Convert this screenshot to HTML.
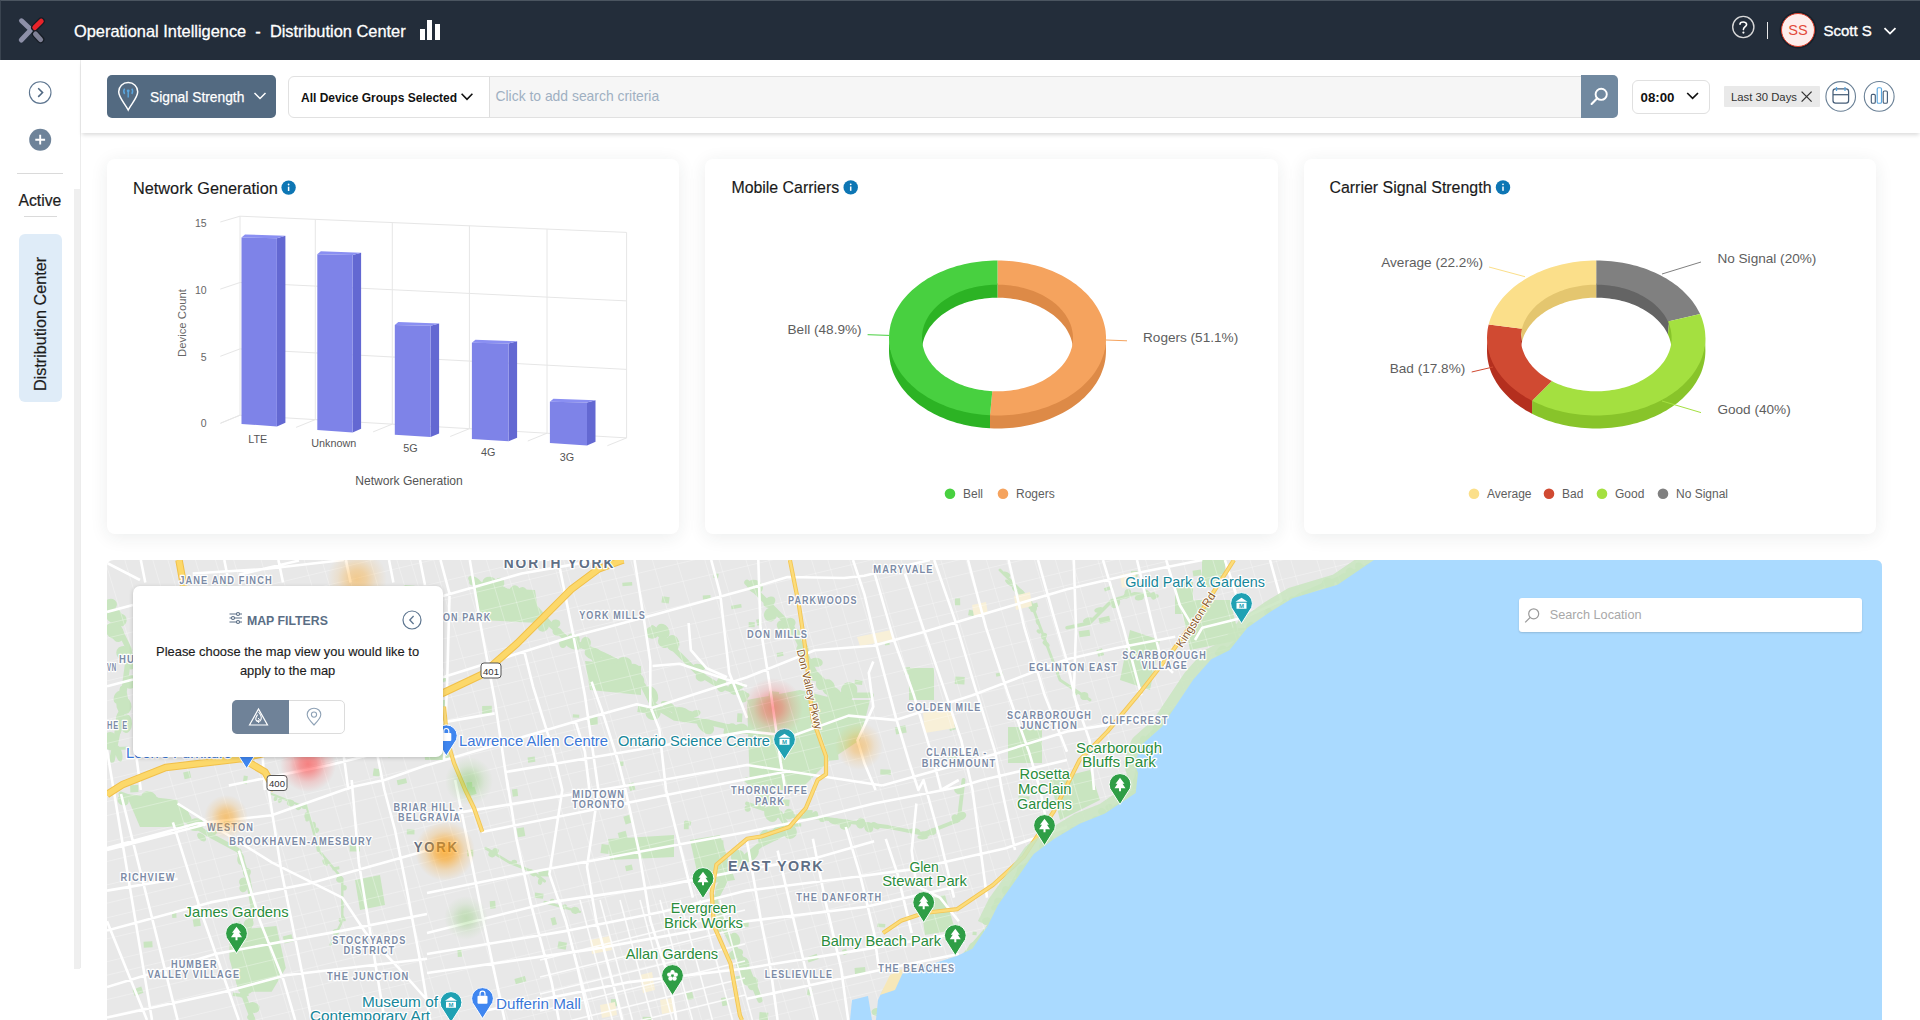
<!DOCTYPE html>
<html><head><meta charset="utf-8"><title>Operational Intelligence</title>
<style>
*{box-sizing:border-box;margin:0;padding:0}
html,body{width:1920px;height:1020px;overflow:hidden}
body{position:relative;background:#fff;font-family:"Liberation Sans",sans-serif;}
.a{position:absolute}
.t{position:absolute;line-height:1;white-space:pre}
svg{position:absolute;overflow:visible}

</style></head><body>
<div class="a" style="left:0;top:0;width:1920px;height:60px;background:#232d3a;border-top:1px solid #4b5560;border-left:1px solid #3a4450"></div>
<svg style="left:0;top:0" width="60" height="60" viewBox="0 0 60 60">
<defs><linearGradient id="lg1" x1="0" y1="0" x2="1" y2="1"><stop offset="0" stop-color="#9a9cb0"/><stop offset="1" stop-color="#6c6e82"/></linearGradient></defs>
<path d="M21.5 20.8 L31 29.8 L21.3 40" fill="none" stroke="#8d90a8" stroke-width="5" stroke-linecap="round" stroke-linejoin="round"/>
<path d="M35.5 34 L40.6 39.6" fill="none" stroke="#161c24" stroke-width="7.5" stroke-linecap="round"/>
<path d="M34.8 27.6 L41.2 21.2" fill="none" stroke="#161c24" stroke-width="7.5" stroke-linecap="round"/>
<path d="M35.5 34 L40.6 39.6" fill="none" stroke="#7f8196" stroke-width="5" stroke-linecap="round"/>
<path d="M34.8 27.6 L41.2 21.2" fill="none" stroke="#e8232a" stroke-width="5" stroke-linecap="round"/>
</svg>
<div class="t" style="left:74.0px;top:22.72px;font-size:16.4px;color:#ffffff;-webkit-text-stroke:0.3px #fff;">Operational Intelligence&nbsp;&nbsp;-&nbsp;&nbsp;Distribution Center</div>
<div class="a" style="left:420px;top:29px;width:5px;height:11px;background:#fff"></div><div class="a" style="left:427px;top:20px;width:5px;height:20px;background:#fff"></div><div class="a" style="left:434.5px;top:24px;width:5px;height:16px;background:#fff"></div>
<svg style="left:1730px;top:14px" width="28" height="28" viewBox="0 0 28 28"><circle cx="13.3" cy="13" r="10.6" fill="none" stroke="#d8d8d8" stroke-width="1.4"/>
<path d="M10 10.2 C10 7.4 16.6 7.2 16.6 10.4 C16.6 12.6 13.4 12.8 13.4 15.6" fill="none" stroke="#fff" stroke-width="1.6" stroke-linecap="round"/><circle cx="13.4" cy="18.6" r="1.1" fill="#fff"/></svg>
<div class="a" style="left:1766.5px;top:22px;width:1.6px;height:17px;background:#e8e8e8"></div>
<div class="a" style="left:1781px;top:13px;width:34px;height:34px;border-radius:50%;background:#fdeeec;border:1.6px solid #e0402c;box-shadow:0 0 0 1.5px #16202a"></div>
<div class="t" style="left:1778.0px;width:40px;text-align:center;top:23.44px;font-size:14.6px;color:#e34a38;">SS</div>
<div class="t" style="left:1823.5px;top:22.90px;font-size:15.0px;color:#ffffff;-webkit-text-stroke:0.35px #fff;">Scott S</div>
<svg style="left:1882px;top:25px" width="16" height="12" viewBox="0 0 16 12"><path d="M2.5 3.2 L8 8.6 L13.5 3.2" fill="none" stroke="#fff" stroke-width="1.8"/></svg>
<div class="a" style="left:80px;top:60px;width:1px;height:908px;background:#ececec"></div>
<div class="a" style="left:74px;top:189px;width:6px;height:780px;background:#efefef"></div>
<svg style="left:28px;top:81px" width="24" height="24" viewBox="0 0 24 24"><circle cx="12.2" cy="11.6" r="10.8" fill="none" stroke="#5e7690" stroke-width="1.1"/><path d="M10.2 7.3 L14.6 11.6 L10.2 15.9" fill="none" stroke="#4f6781" stroke-width="1.5"/></svg>
<svg style="left:28px;top:128px" width="24" height="24" viewBox="0 0 24 24"><circle cx="12.2" cy="11.7" r="11" fill="#6e8399"/><path d="M12.2 6.8 V16.6 M7.3 11.7 H17.1" stroke="#fff" stroke-width="1.9"/></svg>
<div class="a" style="left:17px;top:173px;width:46px;height:1px;background:#dadada"></div>
<div class="t" style="left:18.5px;top:192.71px;font-size:15.7px;color:#1c1c1c;-webkit-text-stroke:0.2px #1c1c1c;">Active</div>
<div class="a" style="left:24px;top:216px;width:33px;height:1px;background:#dadada"></div>
<div class="a" style="left:19px;top:234px;width:43px;height:168px;background:#dfecf8;border-radius:6px"></div>
<div class="t" style="left:39.8px;top:323.5px;font-size:16.2px;color:#1c1c1c;-webkit-text-stroke:0.2px #1c1c1c;transform:translate(-50%,-50%) rotate(-90deg);">Distribution Center</div>
<div class="a" style="left:81px;top:60px;width:1839px;height:73px;background:#fff;box-shadow:0 3px 4px -1px rgba(0,0,0,0.14)"></div>
<div class="a" style="left:107px;top:75px;width:169px;height:42.5px;background:#536a81;border-radius:5px"></div>
<svg style="left:116px;top:80px" width="26" height="34" viewBox="0 0 26 34"><path d="M12.2 2.6 C6.8 2.6 2.7 6.6 2.7 11.8 C2.7 17.6 8.6 23 12.2 30 C15.8 23 21.7 17.6 21.7 11.8 C21.7 6.6 17.6 2.6 12.2 2.6 Z" fill="none" stroke="#fff" stroke-width="1.5"/>
<path d="M8.6 8.6 A5 5 0 0 0 8.6 14 M15.8 8.6 A5 5 0 0 1 15.8 14" fill="none" stroke="#5aa7e0" stroke-width="1.4"/><circle cx="12.2" cy="10.8" r="1.4" fill="#5aa7e0"/><path d="M12.2 11 V17.5" stroke="#5aa7e0" stroke-width="1.4"/></svg>
<div class="t" style="left:150.0px;top:90.82px;font-size:13.8px;color:#ffffff;-webkit-text-stroke:0.25px #fff;">Signal Strength</div>
<svg style="left:253px;top:90px" width="14" height="12" viewBox="0 0 14 12"><path d="M1.5 3 L7 8.5 L12.5 3" fill="none" stroke="#fff" stroke-width="1.5"/></svg>
<div class="a" style="left:287.5px;top:75.5px;width:1300px;height:42px;background:#fff;border:1px solid #e1e1e1;border-radius:6px 0 0 6px"></div>
<div class="a" style="left:489px;top:76.5px;width:1092px;height:40px;background:#f6f6f6;border-left:1px solid #dedede"></div>
<div class="t" style="left:301.0px;top:91.84px;font-size:12.0px;color:#111;font-weight:700;">All Device Groups Selected</div>
<svg style="left:460px;top:91px" width="14" height="12" viewBox="0 0 14 12"><path d="M1.6 2.8 L7 8.4 L12.4 2.8" fill="none" stroke="#111" stroke-width="1.6"/></svg>
<div class="t" style="left:495.5px;top:90.13px;font-size:13.9px;color:#9fb0c2;">Click to add search criteria</div>
<div class="a" style="left:1581px;top:75.3px;width:36.5px;height:42.5px;background:#7189a0;border-radius:0 5px 5px 0"></div>
<svg style="left:1586px;top:83px" width="28" height="28" viewBox="0 0 28 28"><circle cx="15.2" cy="11.3" r="5.6" fill="none" stroke="#fff" stroke-width="1.9"/><path d="M11.2 15.3 L5.6 21" stroke="#fff" stroke-width="2.1" stroke-linecap="round"/></svg>
<div class="a" style="left:1631.5px;top:79.5px;width:78px;height:34px;background:#fff;border:1px solid #e0e0e0;border-radius:6px"></div>
<div class="t" style="left:1640.5px;top:90.74px;font-size:13.3px;color:#111;font-weight:700;">08:00</div>
<svg style="left:1685px;top:90px" width="16" height="12" viewBox="0 0 16 12"><path d="M2.2 3 L7.6 8.4 L13 3" fill="none" stroke="#111" stroke-width="1.7"/></svg>
<div class="a" style="left:1724px;top:86px;width:96px;height:21px;background:#e9e9e9;border-radius:1px"></div>
<div class="t" style="left:1731.0px;top:91.63px;font-size:11.3px;color:#333;">Last 30 Days</div>
<svg style="left:1800px;top:90px" width="14" height="14" viewBox="0 0 14 14"><path d="M1.6 1.6 L11.6 11.6 M11.6 1.6 L1.6 11.6" stroke="#333" stroke-width="1.3"/></svg>
<svg style="left:1824px;top:80px" width="34" height="34" viewBox="0 0 34 34"><circle cx="16.7" cy="16.4" r="14.8" fill="none" stroke="#6a8096" stroke-width="1.1"/>
<rect x="9" y="8.9" width="15.6" height="14.3" rx="2.6" fill="none" stroke="#465e78" stroke-width="1.25"/><path d="M9 14.7 H24.6" stroke="#465e78" stroke-width="1.25"/><path d="M12.5 7 V11 M21 7 V11" stroke="#5aa7e0" stroke-width="1.3"/></svg>
<svg style="left:1862px;top:80px" width="34" height="34" viewBox="0 0 34 34"><circle cx="17.2" cy="16.4" r="14.9" fill="none" stroke="#6a8096" stroke-width="1.1"/>
<rect x="9.3" y="14.3" width="4" height="8.9" rx="1.3" fill="none" stroke="#465e78" stroke-width="1.15"/><rect x="15.2" y="7.7" width="4.3" height="15.5" rx="1.3" fill="none" stroke="#5aa7e0" stroke-width="1.15"/><rect x="21.2" y="11" width="4.2" height="12.2" rx="1.3" fill="none" stroke="#465e78" stroke-width="1.15"/></svg>
<div class="a" style="left:107px;top:159px;width:572px;height:375px;background:#fff;border-radius:8px;box-shadow:0 3px 18px rgba(30,50,50,0.085)"></div>
<div class="a" style="left:705px;top:159px;width:573px;height:375px;background:#fff;border-radius:8px;box-shadow:0 3px 18px rgba(30,50,50,0.085)"></div>
<div class="a" style="left:1304px;top:159px;width:572px;height:375px;background:#fff;border-radius:8px;box-shadow:0 3px 18px rgba(30,50,50,0.085)"></div>
<div class="t" style="left:133.0px;top:179.90px;font-size:16.3px;color:#1a1a1a;-webkit-text-stroke:0.15px #1a1a1a;">Network Generation</div>
<div class="t" style="left:731.4px;top:180.24px;font-size:15.9px;color:#1a1a1a;-webkit-text-stroke:0.15px #1a1a1a;">Mobile Carriers</div>
<div class="t" style="left:1329.4px;top:180.20px;font-size:15.95px;color:#1a1a1a;-webkit-text-stroke:0.15px #1a1a1a;">Carrier Signal Strength</div>
<svg style="left:0;top:0" width="1920" height="1020" viewBox="0 0 1920 1020"><circle cx="288.6" cy="187.6" r="7.2" fill="#0d76b4"/><rect x="287.85" y="186.7" width="1.5" height="4.3" fill="#fff"/><circle cx="288.6" cy="184.5" r="0.9" fill="#fff"/><circle cx="850.7" cy="187.4" r="7.2" fill="#0d76b4"/><rect x="849.95" y="186.5" width="1.5" height="4.3" fill="#fff"/><circle cx="850.7" cy="184.3" r="0.9" fill="#fff"/><circle cx="1503" cy="187.4" r="7.2" fill="#0d76b4"/><rect x="1502.25" y="186.5" width="1.5" height="4.3" fill="#fff"/><circle cx="1503" cy="184.3" r="0.9" fill="#fff"/><path d="M240.0 415.2 L626.6 437.9 M220.3 423.4 L240.0 415.2 M240.0 348.9 L626.6 369.4 M220.3 356.3 L240.0 348.9 M240.0 282.5 L626.6 300.9 M220.3 289.1 L240.0 282.5 M240.0 216.2 L626.6 232.4 M220.3 222.0 L240.0 216.2 M240 216.2 L240 415.2 M220.8 423.0 L240 415.2 M315.3 219.4 L315.3 419.6 M296.1 427.4 L315.3 419.6 M392.3 222.6 L392.3 424.1 M373.1 431.9 L392.3 424.1 M469.4 225.8 L469.4 428.7 M450.2 436.5 L469.4 428.7 M547 229.1 L547 433.2 M527.8 441.0 L547 433.2 M626.6 232.4 L626.6 437.9 M607.4 445.7 L626.6 437.9" stroke="#e6e6e6" stroke-width="1" fill="none"/><path d="M276.9 238.20000000000002 L285.4 235.8 L285.4 422.8 L276.9 426.4 Z" fill="#6368d2"/><path d="M241.5 237.4 L245.0 234.4 L285.4 235.8 L276.9 238.20000000000002 Z" fill="#8a8ff2"/><path d="M241.5 237.4 L276.9 238.20000000000002 L276.9 426.4 L241.5 424.0 Z" fill="#7e83e8"/><path d="M352.6 255.10000000000002 L361.1 252.70000000000002 L361.1 428.8 L352.6 432.4 Z" fill="#6368d2"/><path d="M317.3 254.3 L320.8 251.3 L361.1 252.70000000000002 L352.6 255.10000000000002 Z" fill="#8a8ff2"/><path d="M317.3 254.3 L352.6 255.10000000000002 L352.6 432.4 L317.3 430.0 Z" fill="#7e83e8"/><path d="M430.6 325.8 L439.1 323.4 L439.1 433.5 L430.6 437.09999999999997 Z" fill="#6368d2"/><path d="M394.8 325.0 L398.3 322.0 L439.1 323.4 L430.6 325.8 Z" fill="#8a8ff2"/><path d="M394.8 325.0 L430.6 325.8 L430.6 437.09999999999997 L394.8 434.7 Z" fill="#7e83e8"/><path d="M508.6 343.6 L517.1 341.2 L517.1 437.7 L508.6 441.29999999999995 Z" fill="#6368d2"/><path d="M471.9 342.8 L475.4 339.8 L517.1 341.2 L508.6 343.6 Z" fill="#8a8ff2"/><path d="M471.9 342.8 L508.6 343.6 L508.6 441.29999999999995 L471.9 438.9 Z" fill="#7e83e8"/><path d="M587.0 402.6 L595.5 400.2 L595.5 441.8 L587.0 445.4 Z" fill="#6368d2"/><path d="M549.9 401.8 L553.4 398.8 L595.5 400.2 L587.0 402.6 Z" fill="#8a8ff2"/><path d="M549.9 401.8 L587.0 402.6 L587.0 445.4 L549.9 443.0 Z" fill="#7e83e8"/></svg>
<div class="t" style="left:166.6px;width:40px;text-align:right;top:217.51px;font-size:10.5px;color:#666;">15</div>
<div class="t" style="left:166.6px;width:40px;text-align:right;top:284.61px;font-size:10.5px;color:#666;">10</div>
<div class="t" style="left:166.6px;width:40px;text-align:right;top:351.71px;font-size:10.5px;color:#666;">5</div>
<div class="t" style="left:166.6px;width:40px;text-align:right;top:417.81px;font-size:10.5px;color:#666;">0</div>
<div class="t" style="left:183px;top:323px;font-size:11.3px;color:#666;transform:translate(-50%,-50%) rotate(-90deg);">Device Count</div>
<div class="t" style="left:217.8px;width:80px;text-align:center;top:434.16px;font-size:10.8px;color:#555;">LTE</div>
<div class="t" style="left:293.8px;width:80px;text-align:center;top:438.36px;font-size:10.8px;color:#555;">Unknown</div>
<div class="t" style="left:370.5px;width:80px;text-align:center;top:442.86px;font-size:10.8px;color:#555;">5G</div>
<div class="t" style="left:448.3px;width:80px;text-align:center;top:446.86px;font-size:10.8px;color:#555;">4G</div>
<div class="t" style="left:527.0px;width:80px;text-align:center;top:451.86px;font-size:10.8px;color:#555;">3G</div>
<div class="t" style="left:309.0px;width:200px;text-align:center;top:474.76px;font-size:12.1px;color:#555;">Network Generation</div>
<svg style="left:0;top:0" width="1920" height="1020" viewBox="0 0 1920 1020"><path d="M1105.7 336.5 L1105.6 339.3 L1105.4 342.0 L1105.1 344.8 L1104.6 347.5 L1104.0 350.2 L1103.2 353.0 L1102.3 355.6 L1101.3 358.3 L1100.2 360.9 L1098.9 363.5 L1097.5 366.1 L1095.9 368.7 L1094.3 371.1 L1092.5 373.6 L1090.6 376.0 L1088.6 378.3 L1086.4 380.6 L1084.2 382.9 L1081.8 385.1 L1079.3 387.2 L1076.8 389.3 L1074.1 391.2 L1071.3 393.2 L1068.5 395.0 L1065.5 396.8 L1062.5 398.5 L1059.3 400.1 L1056.1 401.6 L1052.8 403.1 L1049.5 404.5 L1046.1 405.7 L1042.6 406.9 L1039.1 408.1 L1035.5 409.1 L1031.8 410.0 L1028.2 410.8 L1024.5 411.6 L1020.7 412.2 L1016.9 412.7 L1013.1 413.2 L1009.3 413.5 L1005.4 413.8 L1001.6 413.9 L997.7 414.0 L993.9 414.0 L990.0 413.8 L990.0 428.3 L993.9 428.5 L997.7 428.5 L1001.6 428.4 L1005.5 428.3 L1009.3 428.0 L1013.2 427.7 L1017.0 427.2 L1020.8 426.7 L1024.5 426.1 L1028.3 425.3 L1031.9 424.5 L1035.6 423.6 L1039.2 422.6 L1042.7 421.4 L1046.2 420.2 L1049.6 419.0 L1053.0 417.6 L1056.3 416.1 L1059.5 414.6 L1062.6 413.0 L1065.7 411.3 L1068.7 409.5 L1071.5 407.7 L1074.3 405.7 L1077.0 403.8 L1079.6 401.7 L1082.0 399.6 L1084.4 397.4 L1086.7 395.1 L1088.8 392.8 L1090.9 390.5 L1092.8 388.1 L1094.6 385.6 L1096.2 383.2 L1097.8 380.6 L1099.2 378.0 L1100.5 375.4 L1101.6 372.8 L1102.6 370.1 L1103.5 367.5 L1104.3 364.7 L1104.9 362.0 L1105.4 359.3 L1105.7 356.5 L1105.9 353.8 L1106.0 351.0 Z" fill="#dd8a47"/><path d="M990.0 413.8 L986.3 413.6 L982.5 413.3 L978.8 412.8 L975.1 412.3 L971.4 411.7 L967.7 411.0 L964.1 410.2 L960.6 409.3 L957.0 408.4 L953.5 407.3 L950.1 406.2 L946.8 404.9 L943.4 403.6 L940.2 402.2 L937.0 400.8 L933.9 399.2 L930.9 397.6 L928.0 395.9 L925.1 394.1 L922.4 392.3 L919.7 390.4 L917.1 388.4 L914.6 386.3 L912.3 384.2 L910.0 382.1 L907.8 379.9 L905.8 377.6 L903.8 375.3 L902.0 372.9 L900.3 370.5 L898.7 368.0 L897.2 365.5 L895.8 363.0 L894.6 360.5 L893.5 357.9 L892.5 355.3 L891.7 352.6 L890.9 350.0 L890.4 347.3 L889.9 344.6 L889.6 341.9 L889.4 339.2 L889.3 336.5 L889.0 351.0 L889.1 353.7 L889.3 356.4 L889.6 359.1 L890.1 361.8 L890.6 364.5 L891.4 367.1 L892.2 369.8 L893.2 372.4 L894.3 375.0 L895.5 377.5 L896.9 380.0 L898.4 382.5 L900.0 385.0 L901.7 387.4 L903.5 389.8 L905.5 392.1 L907.6 394.4 L909.7 396.6 L912.0 398.7 L914.4 400.8 L916.9 402.9 L919.5 404.9 L922.2 406.8 L924.9 408.6 L927.8 410.4 L930.7 412.1 L933.8 413.7 L936.9 415.3 L940.0 416.7 L943.3 418.1 L946.6 419.4 L950.0 420.7 L953.4 421.8 L956.9 422.9 L960.4 423.8 L964.0 424.7 L967.7 425.5 L971.3 426.2 L975.0 426.8 L978.7 427.3 L982.5 427.8 L986.2 428.1 L990.0 428.3 Z" fill="#2cb324"/><clipPath id="cp1"><ellipse cx="997.5" cy="338" rx="76.7" ry="54.5"/></clipPath><g clip-path="url(#cp1)"><path d="M997.5 281.7 L1000.2 281.7 L1002.9 281.8 L1005.5 282.0 L1008.2 282.2 L1010.9 282.5 L1013.5 282.9 L1016.1 283.3 L1018.7 283.8 L1021.3 284.4 L1023.8 285.0 L1026.3 285.7 L1028.8 286.4 L1031.3 287.2 L1033.6 288.1 L1036.0 289.0 L1038.3 290.0 L1040.6 291.1 L1042.8 292.2 L1044.9 293.3 L1047.0 294.5 L1049.0 295.8 L1051.0 297.1 L1052.9 298.4 L1054.7 299.8 L1056.5 301.3 L1058.2 302.8 L1059.8 304.3 L1061.3 305.9 L1062.8 307.5 L1064.2 309.1 L1065.5 310.8 L1066.7 312.5 L1067.8 314.2 L1068.9 316.0 L1069.9 317.8 L1070.7 319.6 L1071.5 321.4 L1072.2 323.2 L1072.8 325.1 L1073.3 327.0 L1073.8 328.9 L1074.1 330.8 L1074.3 332.7 L1074.5 334.6 L1074.5 336.5 L1073.0 351.0 L1073.0 349.1 L1072.8 347.3 L1072.6 345.4 L1072.3 343.6 L1071.9 341.7 L1071.4 339.9 L1070.8 338.1 L1070.1 336.3 L1069.3 334.5 L1068.4 332.8 L1067.5 331.0 L1066.5 329.3 L1065.4 327.6 L1064.2 326.0 L1062.9 324.4 L1061.5 322.8 L1060.1 321.2 L1058.6 319.7 L1057.0 318.2 L1055.3 316.7 L1053.6 315.3 L1051.8 314.0 L1049.9 312.7 L1048.0 311.4 L1046.0 310.2 L1044.0 309.0 L1041.9 307.9 L1039.7 306.8 L1037.5 305.8 L1035.2 304.8 L1032.9 303.9 L1030.6 303.1 L1028.2 302.3 L1025.8 301.6 L1023.3 300.9 L1020.8 300.3 L1018.3 299.8 L1015.8 299.3 L1013.2 298.9 L1010.6 298.5 L1008.0 298.2 L1005.4 298.0 L1002.8 297.8 L1000.1 297.7 L997.5 297.7 Z" fill="#dd8a47"/><path d="M920.5 336.5 L920.5 334.6 L920.7 332.7 L920.9 330.8 L921.2 328.9 L921.7 327.0 L922.2 325.1 L922.8 323.2 L923.5 321.4 L924.3 319.6 L925.1 317.8 L926.1 316.0 L927.2 314.2 L928.3 312.5 L929.5 310.8 L930.8 309.1 L932.2 307.5 L933.7 305.9 L935.2 304.3 L936.8 302.8 L938.5 301.3 L940.3 299.8 L942.1 298.4 L944.0 297.1 L946.0 295.8 L948.0 294.5 L950.1 293.3 L952.2 292.2 L954.4 291.1 L956.7 290.0 L959.0 289.0 L961.4 288.1 L963.7 287.2 L966.2 286.4 L968.7 285.7 L971.2 285.0 L973.7 284.4 L976.3 283.8 L978.9 283.3 L981.5 282.9 L984.1 282.5 L986.8 282.2 L989.5 282.0 L992.1 281.8 L994.8 281.7 L997.5 281.7 L997.5 297.7 L994.9 297.7 L992.2 297.8 L989.6 298.0 L987.0 298.2 L984.4 298.5 L981.8 298.9 L979.2 299.3 L976.7 299.8 L974.2 300.3 L971.7 300.9 L969.2 301.6 L966.8 302.3 L964.4 303.1 L962.1 303.9 L959.8 304.8 L957.5 305.8 L955.3 306.8 L953.1 307.9 L951.0 309.0 L949.0 310.2 L947.0 311.4 L945.1 312.7 L943.2 314.0 L941.4 315.3 L939.7 316.7 L938.0 318.2 L936.4 319.7 L934.9 321.2 L933.5 322.8 L932.1 324.4 L930.8 326.0 L929.6 327.6 L928.5 329.3 L927.5 331.0 L926.6 332.8 L925.7 334.5 L924.9 336.3 L924.2 338.1 L923.6 339.9 L923.1 341.7 L922.7 343.6 L922.4 345.4 L922.2 347.3 L922.0 349.1 L922.0 351.0 Z" fill="#2cb324"/></g><path d="M997.5 260.5 L1001.3 260.5 L1005.1 260.7 L1009.0 260.9 L1012.8 261.3 L1016.5 261.7 L1020.3 262.2 L1024.0 262.9 L1027.7 263.6 L1031.4 264.4 L1035.0 265.3 L1038.6 266.3 L1042.1 267.3 L1045.5 268.5 L1048.9 269.8 L1052.3 271.1 L1055.5 272.5 L1058.7 274.0 L1061.9 275.6 L1064.9 277.3 L1067.9 279.0 L1070.7 280.8 L1073.5 282.7 L1076.2 284.6 L1078.8 286.7 L1081.3 288.7 L1083.6 290.9 L1085.9 293.1 L1088.1 295.3 L1090.1 297.7 L1092.1 300.0 L1093.9 302.4 L1095.6 304.9 L1097.2 307.4 L1098.6 309.9 L1099.9 312.5 L1101.1 315.1 L1102.2 317.7 L1103.1 320.3 L1103.9 323.0 L1104.6 325.7 L1105.2 328.4 L1105.6 331.1 L1105.8 333.8 L1106.0 336.6 L1106.0 339.3 L1105.9 342.0 L1105.6 344.8 L1105.2 347.5 L1104.6 350.2 L1104.0 352.9 L1103.2 355.6 L1102.2 358.2 L1101.2 360.8 L1100.0 363.4 L1098.7 366.0 L1097.2 368.5 L1095.7 371.0 L1094.0 373.5 L1092.1 375.9 L1090.2 378.3 L1088.2 380.6 L1086.0 382.8 L1083.7 385.0 L1081.4 387.2 L1078.9 389.3 L1076.3 391.3 L1073.6 393.2 L1070.9 395.1 L1068.0 396.9 L1065.0 398.7 L1062.0 400.3 L1058.9 401.9 L1055.7 403.4 L1052.4 404.8 L1049.1 406.2 L1045.7 407.4 L1042.2 408.6 L1038.7 409.7 L1035.1 410.7 L1031.5 411.6 L1027.9 412.4 L1024.2 413.1 L1020.5 413.7 L1016.7 414.3 L1012.9 414.7 L1009.1 415.1 L1005.3 415.3 L1001.5 415.4 L997.7 415.5 L993.8 415.5 L990.0 415.3 L992.3 391.2 L994.9 391.3 L997.6 391.3 L1000.3 391.3 L1002.9 391.2 L1005.6 391.0 L1008.2 390.8 L1010.9 390.5 L1013.5 390.1 L1016.1 389.7 L1018.6 389.2 L1021.2 388.6 L1023.7 388.0 L1026.2 387.3 L1028.6 386.6 L1031.0 385.8 L1033.4 384.9 L1035.7 384.0 L1038.0 383.0 L1040.2 382.0 L1042.4 380.9 L1044.5 379.7 L1046.5 378.5 L1048.5 377.3 L1050.5 376.0 L1052.3 374.6 L1054.1 373.2 L1055.9 371.8 L1057.5 370.3 L1059.1 368.8 L1060.6 367.3 L1062.0 365.7 L1063.4 364.1 L1064.6 362.4 L1065.8 360.7 L1066.9 359.0 L1067.9 357.3 L1068.8 355.5 L1069.6 353.7 L1070.4 351.9 L1071.0 350.1 L1071.6 348.2 L1072.1 346.4 L1072.4 344.5 L1072.7 342.7 L1072.9 340.8 L1073.0 338.9 L1073.0 337.0 L1072.9 335.1 L1072.7 333.3 L1072.4 331.4 L1072.0 329.5 L1071.6 327.7 L1071.0 325.8 L1070.4 324.0 L1069.6 322.2 L1068.8 320.4 L1067.9 318.7 L1066.8 316.9 L1065.8 315.2 L1064.6 313.5 L1063.3 311.9 L1062.0 310.2 L1060.5 308.7 L1059.0 307.1 L1057.4 305.6 L1055.8 304.1 L1054.1 302.7 L1052.3 301.3 L1050.4 300.0 L1048.5 298.7 L1046.5 297.4 L1044.4 296.2 L1042.3 295.1 L1040.1 294.0 L1037.9 293.0 L1035.6 292.0 L1033.3 291.1 L1030.9 290.2 L1028.5 289.4 L1026.1 288.7 L1023.6 288.0 L1021.1 287.4 L1018.5 286.8 L1016.0 286.3 L1013.4 285.9 L1010.8 285.5 L1008.1 285.2 L1005.5 285.0 L1002.8 284.8 L1000.2 284.7 L997.5 284.7 Z" fill="#f5a35e"/><path d="M990.0 415.3 L986.2 415.1 L982.5 414.8 L978.7 414.3 L975.0 413.8 L971.3 413.2 L967.7 412.5 L964.0 411.7 L960.5 410.8 L956.9 409.9 L953.4 408.8 L950.0 407.7 L946.6 406.5 L943.3 405.1 L940.1 403.7 L936.9 402.3 L933.8 400.7 L930.7 399.1 L927.8 397.4 L924.9 395.6 L922.2 393.8 L919.5 391.9 L916.9 389.9 L914.4 387.8 L912.0 385.7 L909.8 383.6 L907.6 381.4 L905.5 379.1 L903.6 376.8 L901.7 374.4 L900.0 372.0 L898.4 369.6 L896.9 367.1 L895.6 364.5 L894.3 362.0 L893.2 359.4 L892.2 356.8 L891.4 354.1 L890.7 351.5 L890.1 348.8 L889.6 346.1 L889.3 343.4 L889.1 340.7 L889.0 338.0 L889.1 335.3 L889.3 332.6 L889.6 329.9 L890.1 327.2 L890.6 324.6 L891.4 321.9 L892.2 319.3 L893.2 316.7 L894.3 314.1 L895.5 311.5 L896.9 309.0 L898.4 306.5 L900.0 304.0 L901.7 301.6 L903.5 299.3 L905.5 296.9 L907.5 294.7 L909.7 292.5 L912.0 290.3 L914.4 288.2 L916.9 286.2 L919.4 284.2 L922.1 282.3 L924.9 280.4 L927.7 278.6 L930.7 276.9 L933.7 275.3 L936.8 273.8 L940.0 272.3 L943.2 270.9 L946.6 269.6 L949.9 268.3 L953.4 267.2 L956.8 266.1 L960.4 265.2 L964.0 264.3 L967.6 263.5 L971.2 262.8 L974.9 262.2 L978.7 261.7 L982.4 261.3 L986.2 260.9 L989.9 260.7 L993.7 260.5 L997.5 260.5 L997.5 284.7 L994.9 284.7 L992.2 284.8 L989.6 285.0 L987.0 285.2 L984.4 285.5 L981.8 285.9 L979.2 286.3 L976.7 286.8 L974.2 287.3 L971.7 287.9 L969.2 288.6 L966.8 289.3 L964.4 290.1 L962.0 290.9 L959.7 291.8 L957.5 292.8 L955.3 293.8 L953.1 294.9 L951.0 296.0 L949.0 297.2 L947.0 298.4 L945.0 299.7 L943.2 301.0 L941.4 302.3 L939.7 303.7 L938.0 305.2 L936.4 306.7 L934.9 308.2 L933.5 309.8 L932.1 311.4 L930.8 313.0 L929.6 314.6 L928.5 316.3 L927.5 318.0 L926.5 319.8 L925.7 321.5 L924.9 323.3 L924.2 325.1 L923.6 326.9 L923.1 328.8 L922.7 330.6 L922.4 332.4 L922.2 334.3 L922.0 336.2 L922.0 338.0 L922.0 339.9 L922.2 341.7 L922.4 343.6 L922.7 345.4 L923.2 347.3 L923.7 349.1 L924.3 350.9 L924.9 352.7 L925.7 354.5 L926.6 356.3 L927.5 358.0 L928.5 359.7 L929.7 361.4 L930.9 363.0 L932.1 364.7 L933.5 366.3 L934.9 367.8 L936.4 369.4 L938.0 370.8 L939.7 372.3 L941.4 373.7 L943.2 375.0 L945.1 376.4 L947.0 377.6 L949.0 378.8 L951.1 380.0 L953.2 381.1 L955.3 382.2 L957.5 383.2 L959.8 384.2 L962.1 385.1 L964.4 385.9 L966.8 386.7 L969.3 387.4 L971.7 388.1 L974.2 388.7 L976.7 389.2 L979.3 389.7 L981.9 390.1 L984.4 390.5 L987.0 390.8 L989.7 391.0 L992.3 391.2 Z" fill="#48d040"/><path d="M1705.1 336.5 L1705.0 339.2 L1704.8 341.9 L1704.5 344.6 L1704.0 347.3 L1703.4 350.0 L1702.7 352.6 L1701.9 355.2 L1700.9 357.9 L1699.8 360.4 L1698.5 363.0 L1697.2 365.5 L1695.7 368.0 L1694.1 370.5 L1692.4 372.9 L1690.5 375.2 L1688.6 377.6 L1686.5 379.8 L1684.3 382.1 L1682.0 384.2 L1679.6 386.3 L1677.1 388.4 L1674.5 390.3 L1671.8 392.2 L1669.1 394.1 L1666.2 395.9 L1663.2 397.6 L1660.2 399.2 L1657.1 400.8 L1653.9 402.2 L1650.7 403.6 L1647.3 404.9 L1643.9 406.2 L1640.5 407.3 L1637.0 408.4 L1633.4 409.3 L1629.9 410.2 L1626.2 411.0 L1622.5 411.7 L1618.8 412.3 L1615.1 412.8 L1611.4 413.2 L1607.6 413.6 L1603.8 413.8 L1600.0 414.0 L1596.2 414.0 L1592.4 414.0 L1588.6 413.8 L1584.8 413.6 L1581.0 413.2 L1577.3 412.8 L1573.6 412.3 L1569.9 411.7 L1566.2 411.0 L1562.5 410.2 L1559.0 409.3 L1555.4 408.4 L1551.9 407.3 L1548.5 406.2 L1545.1 404.9 L1541.8 403.6 L1538.5 402.2 L1535.3 400.8 L1532.2 399.2 L1532.0 413.7 L1535.1 415.3 L1538.3 416.7 L1541.6 418.1 L1544.9 419.4 L1548.3 420.7 L1551.8 421.8 L1555.3 422.9 L1558.9 423.8 L1562.5 424.7 L1566.1 425.5 L1569.8 426.2 L1573.5 426.8 L1577.2 427.3 L1581.0 427.7 L1584.8 428.1 L1588.6 428.3 L1592.4 428.5 L1596.2 428.5 L1600.0 428.5 L1603.8 428.3 L1607.6 428.1 L1611.4 427.7 L1615.2 427.3 L1618.9 426.8 L1622.6 426.2 L1626.3 425.5 L1629.9 424.7 L1633.5 423.8 L1637.1 422.9 L1640.6 421.8 L1644.1 420.7 L1647.5 419.4 L1650.8 418.1 L1654.1 416.7 L1657.3 415.3 L1660.4 413.7 L1663.4 412.1 L1666.4 410.4 L1669.3 408.6 L1672.1 406.7 L1674.8 404.8 L1677.4 402.9 L1679.9 400.8 L1682.3 398.7 L1684.5 396.6 L1686.7 394.3 L1688.8 392.1 L1690.8 389.8 L1692.6 387.4 L1694.3 385.0 L1696.0 382.5 L1697.4 380.0 L1698.8 377.5 L1700.1 374.9 L1701.2 372.4 L1702.2 369.7 L1703.0 367.1 L1703.7 364.5 L1704.3 361.8 L1704.8 359.1 L1705.1 356.4 L1705.3 353.7 L1705.4 351.0 Z" fill="#88c42a"/><path d="M1532.2 399.2 L1529.2 397.6 L1526.2 395.9 L1523.3 394.1 L1520.6 392.2 L1517.9 390.3 L1515.3 388.4 L1512.8 386.3 L1510.4 384.2 L1508.1 382.1 L1505.9 379.8 L1503.8 377.6 L1501.9 375.3 L1500.0 372.9 L1498.3 370.5 L1496.7 368.0 L1495.2 365.5 L1493.9 363.0 L1492.6 360.4 L1491.5 357.9 L1490.5 355.2 L1489.7 352.6 L1489.0 350.0 L1488.4 347.3 L1487.9 344.6 L1487.6 341.9 L1487.4 339.2 L1487.3 336.5 L1487.0 351.0 L1487.1 353.7 L1487.3 356.4 L1487.6 359.1 L1488.1 361.8 L1488.7 364.5 L1489.4 367.1 L1490.2 369.7 L1491.2 372.4 L1492.3 374.9 L1493.6 377.5 L1495.0 380.0 L1496.4 382.5 L1498.1 385.0 L1499.8 387.4 L1501.6 389.8 L1503.6 392.1 L1505.7 394.3 L1507.9 396.6 L1510.1 398.7 L1512.5 400.8 L1515.0 402.9 L1517.6 404.8 L1520.3 406.7 L1523.1 408.6 L1526.0 410.4 L1529.0 412.1 L1532.0 413.7 Z" fill="#b42f1e"/><clipPath id="cp2"><ellipse cx="1596.2" cy="338" rx="76.60000000000001" ry="54.5"/></clipPath><g clip-path="url(#cp2)"><path d="M1596.2 281.7 L1598.9 281.7 L1601.6 281.8 L1604.2 282.0 L1606.9 282.2 L1609.6 282.5 L1612.2 282.9 L1614.8 283.3 L1617.4 283.8 L1620.0 284.4 L1622.5 285.0 L1625.0 285.7 L1627.5 286.4 L1629.9 287.2 L1632.3 288.1 L1634.7 289.0 L1637.0 290.0 L1639.2 291.1 L1641.4 292.2 L1643.5 293.3 L1645.6 294.5 L1647.7 295.8 L1649.6 297.1 L1651.5 298.4 L1653.3 299.8 L1655.1 301.3 L1656.8 302.8 L1658.4 304.3 L1660.0 305.9 L1661.4 307.5 L1662.8 309.1 L1664.1 310.8 L1665.3 312.5 L1666.5 314.2 L1667.5 316.0 L1668.5 317.8 L1669.3 319.6 L1667.9 334.5 L1667.1 332.8 L1666.1 331.0 L1665.1 329.3 L1664.0 327.6 L1662.8 326.0 L1661.5 324.4 L1660.1 322.8 L1658.7 321.2 L1657.2 319.7 L1655.6 318.2 L1654.0 316.7 L1652.2 315.3 L1650.4 314.0 L1648.6 312.7 L1646.7 311.4 L1644.7 310.2 L1642.6 309.0 L1640.5 307.9 L1638.4 306.8 L1636.2 305.8 L1633.9 304.8 L1631.6 303.9 L1629.3 303.1 L1626.9 302.3 L1624.4 301.6 L1622.0 300.9 L1619.5 300.3 L1617.0 299.8 L1614.4 299.3 L1611.9 298.9 L1609.3 298.5 L1606.7 298.2 L1604.1 298.0 L1601.5 297.8 L1598.8 297.7 L1596.2 297.7 Z" fill="#646464"/><path d="M1669.3 319.6 L1670.1 321.4 L1670.8 323.2 L1671.4 325.1 L1671.9 327.0 L1672.4 328.9 L1672.7 330.8 L1672.9 332.7 L1673.1 334.6 L1673.1 336.5 L1671.6 351.0 L1671.6 349.1 L1671.4 347.3 L1671.2 345.4 L1670.9 343.6 L1670.5 341.7 L1670.0 339.9 L1669.4 338.1 L1668.7 336.3 L1667.9 334.5 Z" fill="#88c42a"/><path d="M1519.3 336.5 L1519.3 334.6 L1519.5 332.6 L1519.7 330.7 L1520.1 328.8 L1520.5 326.9 L1522.0 341.7 L1521.5 343.5 L1521.2 345.4 L1521.0 347.3 L1520.8 349.1 L1520.8 351.0 Z" fill="#b42f1e"/><path d="M1520.5 326.9 L1521.0 325.0 L1521.6 323.1 L1522.4 321.2 L1523.2 319.3 L1524.1 317.5 L1525.1 315.6 L1526.2 313.8 L1527.4 312.1 L1528.6 310.3 L1530.0 308.6 L1531.4 307.0 L1533.0 305.3 L1534.6 303.7 L1536.2 302.2 L1538.0 300.7 L1539.8 299.2 L1541.7 297.8 L1543.7 296.4 L1545.8 295.1 L1547.9 293.9 L1550.0 292.7 L1552.3 291.5 L1554.6 290.4 L1556.9 289.4 L1559.3 288.4 L1561.7 287.5 L1564.2 286.7 L1566.7 285.9 L1569.3 285.2 L1571.9 284.5 L1574.5 283.9 L1577.1 283.4 L1579.8 283.0 L1582.5 282.6 L1585.2 282.3 L1588.0 282.0 L1590.7 281.8 L1593.5 281.7 L1596.2 281.7 L1596.2 297.7 L1593.5 297.7 L1590.8 297.8 L1588.1 298.0 L1585.4 298.2 L1582.8 298.5 L1580.1 298.9 L1577.5 299.4 L1574.9 299.9 L1572.3 300.4 L1569.8 301.1 L1567.3 301.8 L1564.8 302.5 L1562.4 303.4 L1560.0 304.2 L1557.7 305.2 L1555.4 306.2 L1553.1 307.3 L1550.9 308.4 L1548.8 309.5 L1546.7 310.8 L1544.7 312.0 L1542.8 313.4 L1540.9 314.7 L1539.1 316.2 L1537.4 317.6 L1535.8 319.1 L1534.2 320.7 L1532.7 322.3 L1531.3 323.9 L1530.0 325.5 L1528.7 327.2 L1527.5 329.0 L1526.5 330.7 L1525.5 332.5 L1524.6 334.3 L1523.8 336.1 L1523.1 337.9 L1522.5 339.8 L1522.0 341.7 Z" fill="#e4c66f"/></g><path d="M1596.2 260.5 L1600.0 260.5 L1603.8 260.7 L1607.6 260.9 L1611.4 261.3 L1615.2 261.7 L1618.9 262.2 L1622.6 262.8 L1626.3 263.5 L1629.9 264.3 L1633.5 265.2 L1637.1 266.1 L1640.6 267.2 L1644.1 268.3 L1647.5 269.6 L1650.8 270.9 L1654.1 272.3 L1657.3 273.7 L1660.4 275.3 L1663.4 276.9 L1666.4 278.6 L1669.3 280.4 L1672.1 282.3 L1674.8 284.2 L1677.4 286.1 L1679.9 288.2 L1682.3 290.3 L1684.5 292.4 L1686.7 294.7 L1688.8 296.9 L1690.8 299.2 L1692.6 301.6 L1694.3 304.0 L1696.0 306.5 L1697.4 309.0 L1698.8 311.5 L1700.1 314.1 L1667.9 321.5 L1667.1 319.8 L1666.1 318.0 L1665.1 316.3 L1664.0 314.6 L1662.8 313.0 L1661.5 311.4 L1660.1 309.8 L1658.7 308.2 L1657.2 306.7 L1655.6 305.2 L1654.0 303.7 L1652.2 302.3 L1650.4 301.0 L1648.6 299.7 L1646.7 298.4 L1644.7 297.2 L1642.6 296.0 L1640.5 294.9 L1638.4 293.8 L1636.2 292.8 L1633.9 291.8 L1631.6 290.9 L1629.3 290.1 L1626.9 289.3 L1624.4 288.6 L1622.0 287.9 L1619.5 287.3 L1617.0 286.8 L1614.4 286.3 L1611.9 285.9 L1609.3 285.5 L1606.7 285.2 L1604.1 285.0 L1601.5 284.8 L1598.8 284.7 L1596.2 284.7 Z" fill="#808080"/><path d="M1700.1 314.1 L1701.2 316.6 L1702.2 319.3 L1703.0 321.9 L1703.7 324.5 L1704.3 327.2 L1704.8 329.9 L1705.1 332.6 L1705.3 335.3 L1705.4 338.0 L1705.3 340.7 L1705.1 343.4 L1704.8 346.1 L1704.3 348.8 L1703.7 351.5 L1703.0 354.1 L1702.2 356.7 L1701.2 359.4 L1700.1 361.9 L1698.8 364.5 L1697.4 367.0 L1696.0 369.5 L1694.3 372.0 L1692.6 374.4 L1690.8 376.8 L1688.8 379.1 L1686.7 381.3 L1684.5 383.6 L1682.3 385.7 L1679.9 387.8 L1677.4 389.9 L1674.8 391.8 L1672.1 393.7 L1669.3 395.6 L1666.4 397.4 L1663.4 399.1 L1660.4 400.7 L1657.3 402.3 L1654.1 403.7 L1650.8 405.1 L1647.5 406.4 L1644.1 407.7 L1640.6 408.8 L1637.1 409.9 L1633.5 410.8 L1629.9 411.7 L1626.3 412.5 L1622.6 413.2 L1618.9 413.8 L1615.2 414.3 L1611.4 414.7 L1607.6 415.1 L1603.8 415.3 L1600.0 415.5 L1596.2 415.5 L1592.4 415.5 L1588.6 415.3 L1584.8 415.1 L1581.0 414.7 L1577.2 414.3 L1573.5 413.8 L1569.8 413.2 L1566.1 412.5 L1562.5 411.7 L1558.9 410.8 L1555.3 409.9 L1551.8 408.8 L1548.3 407.7 L1544.9 406.4 L1541.6 405.1 L1538.3 403.7 L1535.1 402.3 L1532.0 400.7 L1551.9 381.1 L1554.0 382.2 L1556.2 383.2 L1558.5 384.2 L1560.8 385.1 L1563.1 385.9 L1565.5 386.7 L1568.0 387.4 L1570.4 388.1 L1572.9 388.7 L1575.4 389.2 L1578.0 389.7 L1580.5 390.1 L1583.1 390.5 L1585.7 390.8 L1588.3 391.0 L1590.9 391.2 L1593.6 391.3 L1596.2 391.3 L1598.8 391.3 L1601.5 391.2 L1604.1 391.0 L1606.7 390.8 L1609.3 390.5 L1611.9 390.1 L1614.4 389.7 L1617.0 389.2 L1619.5 388.7 L1622.0 388.1 L1624.4 387.4 L1626.9 386.7 L1629.3 385.9 L1631.6 385.1 L1633.9 384.2 L1636.2 383.2 L1638.4 382.2 L1640.5 381.1 L1642.6 380.0 L1644.7 378.8 L1646.7 377.6 L1648.6 376.3 L1650.4 375.0 L1652.2 373.7 L1654.0 372.3 L1655.6 370.8 L1657.2 369.3 L1658.7 367.8 L1660.1 366.2 L1661.5 364.6 L1662.8 363.0 L1664.0 361.4 L1665.1 359.7 L1666.1 358.0 L1667.1 356.2 L1667.9 354.5 L1668.7 352.7 L1669.4 350.9 L1670.0 349.1 L1670.5 347.3 L1670.9 345.4 L1671.2 343.6 L1671.4 341.7 L1671.6 339.9 L1671.6 338.0 L1671.6 336.1 L1671.4 334.3 L1671.2 332.4 L1670.9 330.6 L1670.5 328.7 L1670.0 326.9 L1669.4 325.1 L1668.7 323.3 L1667.9 321.5 Z" fill="#a4e040"/><path d="M1532.0 400.7 L1529.0 399.1 L1526.0 397.4 L1523.1 395.6 L1520.3 393.7 L1517.6 391.8 L1515.0 389.8 L1512.5 387.8 L1510.1 385.7 L1507.8 383.5 L1505.6 381.3 L1503.6 379.0 L1501.6 376.7 L1499.8 374.3 L1498.0 371.9 L1496.4 369.5 L1494.9 367.0 L1493.6 364.5 L1492.3 361.9 L1491.2 359.3 L1490.2 356.7 L1489.4 354.0 L1488.6 351.4 L1488.0 348.7 L1487.6 346.0 L1487.3 343.3 L1487.1 340.6 L1487.0 337.9 L1487.1 335.2 L1487.3 332.5 L1487.6 329.8 L1488.1 327.1 L1488.7 324.4 L1522.0 328.7 L1521.5 330.5 L1521.2 332.4 L1521.0 334.2 L1520.8 336.1 L1520.8 337.9 L1520.8 339.8 L1521.0 341.7 L1521.2 343.5 L1521.5 345.4 L1521.9 347.2 L1522.4 349.0 L1523.0 350.8 L1523.7 352.6 L1524.5 354.4 L1525.3 356.2 L1526.3 357.9 L1527.3 359.6 L1528.4 361.3 L1529.6 363.0 L1530.9 364.6 L1532.2 366.2 L1533.7 367.8 L1535.2 369.3 L1536.8 370.8 L1538.4 372.2 L1540.2 373.7 L1542.0 375.0 L1543.8 376.3 L1545.7 377.6 L1547.7 378.8 L1549.8 380.0 L1551.9 381.1 Z" fill="#d04a32"/><path d="M1488.7 324.4 L1489.4 321.7 L1490.3 319.0 L1491.4 316.3 L1492.5 313.7 L1493.8 311.1 L1495.2 308.5 L1496.8 306.0 L1498.5 303.5 L1500.3 301.0 L1502.2 298.6 L1504.2 296.2 L1506.4 293.9 L1508.7 291.7 L1511.1 289.5 L1513.6 287.3 L1516.2 285.3 L1518.9 283.3 L1521.7 281.4 L1524.6 279.5 L1527.6 277.7 L1530.7 276.0 L1533.8 274.4 L1537.1 272.8 L1540.4 271.4 L1543.8 270.0 L1547.2 268.7 L1550.8 267.5 L1554.3 266.4 L1558.0 265.4 L1561.7 264.5 L1565.4 263.7 L1569.1 262.9 L1572.9 262.3 L1576.8 261.7 L1580.6 261.3 L1584.5 260.9 L1588.4 260.7 L1592.3 260.5 L1596.2 260.5 L1596.2 284.7 L1593.5 284.7 L1590.8 284.8 L1588.1 285.0 L1585.4 285.2 L1582.8 285.5 L1580.1 285.9 L1577.5 286.4 L1574.9 286.9 L1572.3 287.4 L1569.8 288.1 L1567.3 288.8 L1564.8 289.5 L1562.4 290.4 L1560.0 291.2 L1557.7 292.2 L1555.4 293.2 L1553.1 294.3 L1550.9 295.4 L1548.8 296.5 L1546.7 297.8 L1544.7 299.0 L1542.8 300.4 L1540.9 301.7 L1539.1 303.2 L1537.4 304.6 L1535.8 306.1 L1534.2 307.7 L1532.7 309.3 L1531.3 310.9 L1530.0 312.5 L1528.7 314.2 L1527.5 316.0 L1526.5 317.7 L1525.5 319.5 L1524.6 321.3 L1523.8 323.1 L1523.1 324.9 L1522.5 326.8 L1522.0 328.7 Z" fill="#fbdf8a"/><path d="M867.6 334.7 L889 335.4" stroke="#48d040" stroke-width="1" fill="none"/><path d="M1106 340 L1127 340.8" stroke="#f5a35e" stroke-width="1" fill="none"/><path d="M1489 267 L1525 276.7" stroke="#fbdf8a" stroke-width="1" fill="none"/><path d="M1701 262 L1662 274" stroke="#808080" stroke-width="1" fill="none"/><path d="M1471.7 372 L1493 367" stroke="#d04a32" stroke-width="1" fill="none"/><path d="M1701 412.6 L1662 401" stroke="#a4e040" stroke-width="1" fill="none"/><circle cx="950" cy="493.8" r="5.3" fill="#48d040"/><circle cx="1003" cy="493.8" r="5.3" fill="#f5a35e"/><circle cx="1474" cy="493.8" r="5.3" fill="#fbdf8a"/><circle cx="1549" cy="493.8" r="5.3" fill="#d04a32"/><circle cx="1602" cy="493.8" r="5.3" fill="#a4e040"/><circle cx="1663" cy="493.8" r="5.3" fill="#808080"/></svg>
<div class="t" style="left:661.6px;width:200px;text-align:right;top:323.09px;font-size:13.6px;color:#5e5e5e;">Bell (48.9%)</div>
<div class="t" style="left:1143.0px;top:331.09px;font-size:13.6px;color:#5e5e5e;">Rogers (51.1%)</div>
<div class="t" style="left:1283.0px;width:200px;text-align:right;top:255.99px;font-size:13.6px;color:#5e5e5e;">Average (22.2%)</div>
<div class="t" style="left:1717.4px;top:251.99px;font-size:13.6px;color:#5e5e5e;">No Signal (20%)</div>
<div class="t" style="left:1265.3px;width:200px;text-align:right;top:361.79px;font-size:13.6px;color:#5e5e5e;">Bad (17.8%)</div>
<div class="t" style="left:1717.4px;top:402.79px;font-size:13.6px;color:#5e5e5e;">Good (40%)</div>
<div class="t" style="left:963.0px;top:488.14px;font-size:12px;color:#5e5e5e;">Bell</div>
<div class="t" style="left:1016.0px;top:488.14px;font-size:12px;color:#5e5e5e;">Rogers</div>
<div class="t" style="left:1487.0px;top:488.14px;font-size:12px;color:#5e5e5e;">Average</div>
<div class="t" style="left:1562.0px;top:488.14px;font-size:12px;color:#5e5e5e;">Bad</div>
<div class="t" style="left:1615.0px;top:488.14px;font-size:12px;color:#5e5e5e;">Good</div>
<div class="t" style="left:1676.0px;top:488.14px;font-size:12px;color:#5e5e5e;">No Signal</div>
<svg style="left:0;top:0" width="1920" height="1020" viewBox="0 0 1920 1020"><defs><clipPath id="mapclip"><path d="M107 567 Q107 560 114 560 L1875 560 Q1882 560 1882 567 L1882 1020 L107 1020 Z"/></clipPath><radialGradient id="hr"><stop offset="0" stop-color="#ff3a3a" stop-opacity="0.7"/><stop offset="0.3" stop-color="#ff3a3a" stop-opacity="0.55"/><stop offset="0.65" stop-color="#ff3a3a" stop-opacity="0.2"/><stop offset="1" stop-color="#ff3a3a" stop-opacity="0"/></radialGradient><radialGradient id="ho"><stop offset="0" stop-color="#ff9900" stop-opacity="0.7"/><stop offset="0.3" stop-color="#ff9900" stop-opacity="0.55"/><stop offset="0.65" stop-color="#ff9900" stop-opacity="0.2"/><stop offset="1" stop-color="#ff9900" stop-opacity="0"/></radialGradient><radialGradient id="hg"><stop offset="0" stop-color="#6cc24a" stop-opacity="0.7"/><stop offset="0.3" stop-color="#6cc24a" stop-opacity="0.55"/><stop offset="0.65" stop-color="#6cc24a" stop-opacity="0.2"/><stop offset="1" stop-color="#6cc24a" stop-opacity="0"/></radialGradient></defs><g clip-path="url(#mapclip)"><rect x="107" y="560" width="1775" height="460" fill="#e8e8e8"/><path d="M121.0 794.0 L177.6 815.0 L208.0 834.0 L238.8 850.6 L248.0 879.0 L253.0 907.0 L246.0 944.7 L238.8 982.0 L253.0 1020.0" fill="none" stroke="#c9e5c0" stroke-width="4.9" stroke-linejoin="round" stroke-linecap="round"/><path d="M271.7 794.0 L307.0 808.0 L318.8 850.6 L342.3 878.8 L342.3 921.0 L330.5 944.7" fill="none" stroke="#c9e5c0" stroke-width="2.4" stroke-linejoin="round" stroke-linecap="round"/><path d="M107.0 605.0 L129.5 650.0 L120.5 718.0 L112.0 760.0" fill="none" stroke="#c9e5c0" stroke-width="5.6" stroke-linejoin="round" stroke-linecap="round"/><path d="M472.0 582.5 L501.4 589.3 L533.0 605.0 L548.8 623.0 L566.8 639.0 L603.0 654.7 L630.0 668.3 L643.5 686.3 L652.5 704.3 L675.0 718.0 L709.0 722.4 L747.0 731.4" fill="none" stroke="#c9e5c0" stroke-width="5.6" stroke-linejoin="round" stroke-linecap="round"/><path d="M652.5 627.7 L675.0 650.0 L697.6 672.8 L720.0 686.3 L747.0 695.3" fill="none" stroke="#c9e5c0" stroke-width="4.9" stroke-linejoin="round" stroke-linecap="round"/><path d="M747.0 582.5 L769.6 605.0 L792.0 627.7 L814.7 672.8 L837.2 695.3 L871.0 695.3" fill="none" stroke="#c9e5c0" stroke-width="5.6" stroke-linejoin="round" stroke-linecap="round"/><path d="M747.0 803.5 L782.3 815.3 L817.6 817.6 L852.9 822.4 L888.2 827.0 L923.5 834.0 L958.8 820.0 L963.5 780.0" fill="none" stroke="#c9e5c0" stroke-width="3.8" stroke-linejoin="round" stroke-linecap="round"/><path d="M747.0 780.0 L770.0 800.0 L790.0 830.0 L760.0 845.0 L730.0 870.0 L715.0 900.0 L721.1 921.2 L732.9 944.7 L747.0 968.2 L760.0 1000.0" fill="none" stroke="#c9e5c0" stroke-width="5.6" stroke-linejoin="round" stroke-linecap="round"/><path d="M485.8 848.2 L509.4 862.4 L532.9 871.8 L544.6 881.2" fill="none" stroke="#c9e5c0" stroke-width="2.8" stroke-linejoin="round" stroke-linecap="round"/><path d="M544.6 902.0 L580.0 911.8" fill="none" stroke="#c9e5c0" stroke-width="2.4" stroke-linejoin="round" stroke-linecap="round"/><path d="M1067.0 627.7 L1089.6 623.0 L1112.0 600.6 L1134.7 593.8 L1157.0 596.0" fill="none" stroke="#c9e5c0" stroke-width="3.5" stroke-linejoin="round" stroke-linecap="round"/><path d="M1000.0 570.0 L1030.0 600.0 L1045.0 640.0 L1060.0 680.0 L1090.0 700.0" fill="none" stroke="#c9e5c0" stroke-width="2.8" stroke-linejoin="round" stroke-linecap="round"/><path d="M878.0 1020.0 L900.0 985.0 L960.0 960.0 L990.0 925.0 L1020.0 870.0 L1050.0 845.0 L1100.0 820.0 L1135.0 790.0 L1140.0 745.0 L1180.0 705.0 L1210.0 665.0 L1250.0 630.0 L1300.0 595.0 L1370.0 565.0" fill="none" stroke="#c9e5c0" stroke-width="4.2" stroke-linejoin="round" stroke-linecap="round"/><g fill="#c9e5c0"><ellipse cx="123.1" cy="800.5" rx="5.8" ry="4.9" transform="rotate(27 123.1 800.5)"/><ellipse cx="138.3" cy="804.4" rx="4.0" ry="4.1" transform="rotate(-12 138.3 804.4)"/><ellipse cx="149.1" cy="798.3" rx="8.3" ry="6.9" transform="rotate(33 149.1 798.3)"/><ellipse cx="152.5" cy="799.2" rx="6.1" ry="3.1" transform="rotate(-4 152.5 799.2)"/><ellipse cx="172.1" cy="817.6" rx="6.0" ry="5.5" transform="rotate(20 172.1 817.6)"/><ellipse cx="181.9" cy="814.4" rx="8.4" ry="7.0" transform="rotate(59 181.9 814.4)"/><ellipse cx="187.4" cy="817.1" rx="4.9" ry="3.1" transform="rotate(53 187.4 817.1)"/><ellipse cx="195.7" cy="824.6" rx="8.2" ry="6.4" transform="rotate(-8 195.7 824.6)"/><ellipse cx="201.6" cy="837.1" rx="5.4" ry="3.1" transform="rotate(42 201.6 837.1)"/><ellipse cx="212.5" cy="830.5" rx="5.1" ry="6.8" transform="rotate(49 212.5 830.5)"/><ellipse cx="240.8" cy="859.2" rx="5.7" ry="3.6" transform="rotate(91 240.8 859.2)"/><ellipse cx="246.9" cy="872.4" rx="4.5" ry="3.9" transform="rotate(110 246.9 872.4)"/><ellipse cx="243.6" cy="882.0" rx="4.5" ry="4.5" transform="rotate(108 243.6 882.0)"/><ellipse cx="243.3" cy="887.8" rx="4.5" ry="3.9" transform="rotate(102 243.3 887.8)"/><ellipse cx="248.6" cy="923.7" rx="5.3" ry="4.7" transform="rotate(137 248.6 923.7)"/><ellipse cx="243.5" cy="933.1" rx="4.4" ry="3.4" transform="rotate(133 243.5 933.1)"/><ellipse cx="250.9" cy="939.8" rx="7.1" ry="6.7" transform="rotate(76 250.9 939.8)"/><ellipse cx="243.4" cy="951.0" rx="5.6" ry="3.2" transform="rotate(64 243.4 951.0)"/><ellipse cx="241.7" cy="953.4" rx="4.8" ry="6.3" transform="rotate(109 241.7 953.4)"/><ellipse cx="243.5" cy="975.7" rx="6.2" ry="6.4" transform="rotate(110 243.5 975.7)"/><ellipse cx="247.9" cy="989.0" rx="4.8" ry="4.7" transform="rotate(34 247.9 989.0)"/><ellipse cx="253.3" cy="1007.5" rx="5.3" ry="6.5" transform="rotate(108 253.3 1007.5)"/><ellipse cx="251.1" cy="1018.0" rx="4.2" ry="2.9" transform="rotate(31 251.1 1018.0)"/><ellipse cx="275.6" cy="798.7" rx="1.8" ry="2.7" transform="rotate(20 275.6 798.7)"/><ellipse cx="279.9" cy="800.6" rx="1.9" ry="2.5" transform="rotate(41 279.9 800.6)"/><ellipse cx="290.6" cy="802.9" rx="3.7" ry="3.3" transform="rotate(10 290.6 802.9)"/><ellipse cx="298.4" cy="807.1" rx="2.8" ry="3.1" transform="rotate(51 298.4 807.1)"/><ellipse cx="304.6" cy="806.3" rx="3.2" ry="2.7" transform="rotate(-12 304.6 806.3)"/><ellipse cx="306.6" cy="815.7" rx="3.5" ry="2.2" transform="rotate(93 306.6 815.7)"/><ellipse cx="307.8" cy="818.8" rx="2.0" ry="3.0" transform="rotate(37 307.8 818.8)"/><ellipse cx="313.5" cy="825.2" rx="3.5" ry="2.4" transform="rotate(84 313.5 825.2)"/><ellipse cx="316.4" cy="830.3" rx="2.5" ry="2.8" transform="rotate(51 316.4 830.3)"/><ellipse cx="318.5" cy="848.1" rx="3.9" ry="2.1" transform="rotate(88 318.5 848.1)"/><ellipse cx="325.3" cy="862.5" rx="3.9" ry="2.2" transform="rotate(57 325.3 862.5)"/><ellipse cx="339.8" cy="879.3" rx="3.5" ry="3.4" transform="rotate(32 339.8 879.3)"/><ellipse cx="344.1" cy="887.8" rx="2.8" ry="2.7" transform="rotate(90 344.1 887.8)"/><ellipse cx="342.6" cy="906.8" rx="1.9" ry="1.5" transform="rotate(120 342.6 906.8)"/><ellipse cx="343.5" cy="918.0" rx="3.7" ry="1.4" transform="rotate(61 343.5 918.0)"/><ellipse cx="340.3" cy="920.3" rx="2.3" ry="1.7" transform="rotate(80 340.3 920.3)"/><ellipse cx="335.9" cy="932.1" rx="3.4" ry="3.1" transform="rotate(153 335.9 932.1)"/><ellipse cx="333.8" cy="938.4" rx="2.2" ry="1.4" transform="rotate(114 333.8 938.4)"/><ellipse cx="110.5" cy="604.7" rx="5.9" ry="6.5" transform="rotate(65 110.5 604.7)"/><ellipse cx="114.0" cy="615.6" rx="8.4" ry="7.5" transform="rotate(30 114.0 615.6)"/><ellipse cx="120.5" cy="620.1" rx="6.5" ry="6.2" transform="rotate(96 120.5 620.1)"/><ellipse cx="113.6" cy="630.4" rx="8.5" ry="7.7" transform="rotate(61 113.6 630.4)"/><ellipse cx="117.7" cy="633.5" rx="8.6" ry="6.3" transform="rotate(81 117.7 633.5)"/><ellipse cx="123.3" cy="652.9" rx="7.0" ry="7.0" transform="rotate(49 123.3 652.9)"/><ellipse cx="130.8" cy="656.8" rx="4.5" ry="5.3" transform="rotate(102 130.8 656.8)"/><ellipse cx="134.7" cy="662.1" rx="8.5" ry="3.5" transform="rotate(122 134.7 662.1)"/><ellipse cx="130.4" cy="681.9" rx="6.9" ry="6.7" transform="rotate(125 130.4 681.9)"/><ellipse cx="123.7" cy="694.9" rx="9.3" ry="3.6" transform="rotate(75 123.7 694.9)"/><ellipse cx="119.9" cy="697.1" rx="7.6" ry="5.7" transform="rotate(125 119.9 697.1)"/><ellipse cx="123.9" cy="705.5" rx="8.7" ry="7.5" transform="rotate(74 123.9 705.5)"/><ellipse cx="120.2" cy="717.7" rx="7.2" ry="4.2" transform="rotate(100 120.2 717.7)"/><ellipse cx="126.3" cy="723.6" rx="9.4" ry="5.7" transform="rotate(93 126.3 723.6)"/><ellipse cx="118.4" cy="729.0" rx="7.9" ry="3.5" transform="rotate(105 118.4 729.0)"/><ellipse cx="110.3" cy="737.5" rx="5.5" ry="5.5" transform="rotate(72 110.3 737.5)"/><ellipse cx="109.4" cy="743.6" rx="6.7" ry="4.7" transform="rotate(77 109.4 743.6)"/><ellipse cx="118.8" cy="753.5" rx="8.4" ry="3.3" transform="rotate(77 118.8 753.5)"/><ellipse cx="474.8" cy="581.0" rx="7.5" ry="3.7" transform="rotate(31 474.8 581.0)"/><ellipse cx="489.5" cy="582.1" rx="7.0" ry="5.3" transform="rotate(3 489.5 582.1)"/><ellipse cx="499.0" cy="583.7" rx="5.1" ry="6.2" transform="rotate(24 499.0 583.7)"/><ellipse cx="506.1" cy="593.4" rx="8.8" ry="4.3" transform="rotate(46 506.1 593.4)"/><ellipse cx="514.6" cy="592.9" rx="5.8" ry="7.6" transform="rotate(4 514.6 592.9)"/><ellipse cx="522.0" cy="593.6" rx="5.3" ry="6.7" transform="rotate(7 522.0 593.6)"/><ellipse cx="527.5" cy="606.9" rx="4.7" ry="5.1" transform="rotate(41 527.5 606.9)"/><ellipse cx="543.3" cy="626.9" rx="4.6" ry="5.6" transform="rotate(69 543.3 626.9)"/><ellipse cx="555.9" cy="623.3" rx="4.4" ry="3.7" transform="rotate(5 555.9 623.3)"/><ellipse cx="557.2" cy="631.8" rx="4.8" ry="4.1" transform="rotate(18 557.2 631.8)"/><ellipse cx="562.7" cy="643.5" rx="4.5" ry="3.5" transform="rotate(78 562.7 643.5)"/><ellipse cx="573.3" cy="639.1" rx="6.6" ry="5.7" transform="rotate(18 573.3 639.1)"/><ellipse cx="573.0" cy="644.8" rx="8.7" ry="4.1" transform="rotate(20 573.0 644.8)"/><ellipse cx="586.0" cy="642.5" rx="4.9" ry="5.7" transform="rotate(-15 586.0 642.5)"/><ellipse cx="593.2" cy="653.6" rx="8.8" ry="6.2" transform="rotate(16 593.2 653.6)"/><ellipse cx="596.6" cy="659.5" rx="8.5" ry="4.4" transform="rotate(56 596.6 659.5)"/><ellipse cx="606.2" cy="661.4" rx="6.3" ry="7.5" transform="rotate(57 606.2 661.4)"/><ellipse cx="613.2" cy="664.1" rx="6.3" ry="6.7" transform="rotate(-8 613.2 664.1)"/><ellipse cx="624.3" cy="663.1" rx="7.6" ry="6.2" transform="rotate(5 624.3 663.1)"/><ellipse cx="634.9" cy="670.9" rx="7.7" ry="5.9" transform="rotate(56 634.9 670.9)"/><ellipse cx="637.4" cy="681.5" rx="7.9" ry="6.9" transform="rotate(92 637.4 681.5)"/><ellipse cx="650.0" cy="691.4" rx="6.2" ry="3.4" transform="rotate(39 650.0 691.4)"/><ellipse cx="651.7" cy="694.6" rx="9.1" ry="5.8" transform="rotate(64 651.7 694.6)"/><ellipse cx="653.1" cy="713.0" rx="7.6" ry="7.1" transform="rotate(-3 653.1 713.0)"/><ellipse cx="669.1" cy="706.7" rx="9.2" ry="4.0" transform="rotate(29 669.1 706.7)"/><ellipse cx="681.0" cy="712.4" rx="9.3" ry="5.2" transform="rotate(10 681.0 712.4)"/><ellipse cx="687.0" cy="716.4" rx="7.7" ry="5.9" transform="rotate(-10 687.0 716.4)"/><ellipse cx="695.4" cy="713.6" rx="5.4" ry="3.4" transform="rotate(-20 695.4 713.6)"/><ellipse cx="703.1" cy="727.4" rx="8.2" ry="3.4" transform="rotate(46 703.1 727.4)"/><ellipse cx="708.2" cy="728.2" rx="6.4" ry="5.5" transform="rotate(51 708.2 728.2)"/><ellipse cx="730.6" cy="730.8" rx="6.6" ry="7.9" transform="rotate(39 730.6 730.8)"/><ellipse cx="732.3" cy="729.7" rx="6.6" ry="4.2" transform="rotate(-23 732.3 729.7)"/><ellipse cx="740.5" cy="729.0" rx="7.7" ry="5.4" transform="rotate(-6 740.5 729.0)"/><ellipse cx="652.4" cy="632.5" rx="6.1" ry="7.0" transform="rotate(81 652.4 632.5)"/><ellipse cx="662.9" cy="631.1" rx="7.9" ry="6.1" transform="rotate(55 662.9 631.1)"/><ellipse cx="663.6" cy="642.0" rx="6.3" ry="5.3" transform="rotate(55 663.6 642.0)"/><ellipse cx="672.7" cy="643.2" rx="8.3" ry="6.6" transform="rotate(75 672.7 643.2)"/><ellipse cx="699.0" cy="667.1" rx="6.2" ry="3.1" transform="rotate(12 699.0 667.1)"/><ellipse cx="700.9" cy="676.7" rx="5.3" ry="4.8" transform="rotate(8 700.9 676.7)"/><ellipse cx="721.6" cy="681.0" rx="4.1" ry="6.2" transform="rotate(41 721.6 681.0)"/><ellipse cx="721.7" cy="685.9" rx="4.8" ry="6.2" transform="rotate(8 721.7 685.9)"/><ellipse cx="734.1" cy="688.7" rx="6.2" ry="5.9" transform="rotate(52 734.1 688.7)"/><ellipse cx="737.6" cy="686.8" rx="7.8" ry="3.1" transform="rotate(-15 737.6 686.8)"/><ellipse cx="742.8" cy="696.4" rx="5.0" ry="6.1" transform="rotate(-15 742.8 696.4)"/><ellipse cx="755.1" cy="586.6" rx="8.1" ry="6.5" transform="rotate(28 755.1 586.6)"/><ellipse cx="769.4" cy="602.1" rx="4.7" ry="6.6" transform="rotate(50 769.4 602.1)"/><ellipse cx="770.6" cy="614.5" rx="6.5" ry="7.1" transform="rotate(30 770.6 614.5)"/><ellipse cx="782.0" cy="625.6" rx="5.4" ry="4.9" transform="rotate(35 782.0 625.6)"/><ellipse cx="789.8" cy="623.1" rx="5.1" ry="5.9" transform="rotate(69 789.8 623.1)"/><ellipse cx="793.9" cy="633.5" rx="5.0" ry="6.8" transform="rotate(94 793.9 633.5)"/><ellipse cx="802.6" cy="651.0" rx="9.4" ry="6.3" transform="rotate(88 802.6 651.0)"/><ellipse cx="816.1" cy="662.3" rx="4.5" ry="6.7" transform="rotate(95 816.1 662.3)"/><ellipse cx="813.0" cy="676.1" rx="7.6" ry="4.4" transform="rotate(23 813.0 676.1)"/><ellipse cx="820.6" cy="684.1" rx="6.2" ry="4.8" transform="rotate(82 820.6 684.1)"/><ellipse cx="828.3" cy="687.2" rx="8.0" ry="6.6" transform="rotate(78 828.3 687.2)"/><ellipse cx="834.5" cy="696.0" rx="8.8" ry="7.1" transform="rotate(72 834.5 696.0)"/><ellipse cx="845.3" cy="697.3" rx="6.9" ry="6.6" transform="rotate(24 845.3 697.3)"/><ellipse cx="849.2" cy="690.2" rx="8.2" ry="8.0" transform="rotate(-10 849.2 690.2)"/><ellipse cx="747.6" cy="808.6" rx="3.0" ry="3.2" transform="rotate(-12 747.6 808.6)"/><ellipse cx="760.5" cy="804.7" rx="3.0" ry="3.7" transform="rotate(25 760.5 804.7)"/><ellipse cx="762.6" cy="804.6" rx="3.5" ry="2.9" transform="rotate(-3 762.6 804.6)"/><ellipse cx="773.2" cy="809.4" rx="3.5" ry="3.1" transform="rotate(-8 773.2 809.4)"/><ellipse cx="777.3" cy="814.1" rx="5.9" ry="3.8" transform="rotate(-1 777.3 814.1)"/><ellipse cx="788.9" cy="814.2" rx="4.9" ry="5.4" transform="rotate(2 788.9 814.2)"/><ellipse cx="809.2" cy="815.9" rx="4.8" ry="3.9" transform="rotate(-14 809.2 815.9)"/><ellipse cx="815.4" cy="814.9" rx="2.8" ry="3.8" transform="rotate(-7 815.4 814.9)"/><ellipse cx="822.5" cy="819.3" rx="3.4" ry="2.7" transform="rotate(-7 822.5 819.3)"/><ellipse cx="835.2" cy="821.4" rx="6.6" ry="3.1" transform="rotate(11 835.2 821.4)"/><ellipse cx="845.4" cy="824.6" rx="6.0" ry="4.9" transform="rotate(-26 845.4 824.6)"/><ellipse cx="860.7" cy="823.2" rx="4.6" ry="5.4" transform="rotate(14 860.7 823.2)"/><ellipse cx="868.8" cy="827.4" rx="4.4" ry="5.2" transform="rotate(-25 868.8 827.4)"/><ellipse cx="875.5" cy="825.8" rx="4.8" ry="2.7" transform="rotate(34 875.5 825.8)"/><ellipse cx="914.7" cy="830.8" rx="5.4" ry="2.5" transform="rotate(3 914.7 830.8)"/><ellipse cx="922.6" cy="837.2" rx="5.3" ry="2.2" transform="rotate(1 922.6 837.2)"/><ellipse cx="925.4" cy="833.9" rx="4.5" ry="2.2" transform="rotate(18 925.4 833.9)"/><ellipse cx="932.4" cy="831.7" rx="3.9" ry="3.4" transform="rotate(-18 932.4 831.7)"/><ellipse cx="955.6" cy="818.7" rx="3.5" ry="4.6" transform="rotate(-35 955.6 818.7)"/><ellipse cx="961.5" cy="815.8" rx="4.0" ry="4.9" transform="rotate(-116 961.5 815.8)"/><ellipse cx="959.1" cy="790.0" rx="4.3" ry="5.0" transform="rotate(-76 959.1 790.0)"/><ellipse cx="760.7" cy="799.9" rx="6.4" ry="5.7" transform="rotate(53 760.7 799.9)"/><ellipse cx="774.7" cy="804.0" rx="5.9" ry="5.2" transform="rotate(18 774.7 804.0)"/><ellipse cx="771.0" cy="814.0" rx="8.4" ry="6.4" transform="rotate(65 771.0 814.0)"/><ellipse cx="790.0" cy="832.0" rx="6.9" ry="7.0" transform="rotate(179 790.0 832.0)"/><ellipse cx="779.6" cy="830.9" rx="9.1" ry="5.8" transform="rotate(142 779.6 830.9)"/><ellipse cx="772.6" cy="835.3" rx="9.5" ry="5.7" transform="rotate(171 772.6 835.3)"/><ellipse cx="763.2" cy="836.3" rx="7.5" ry="4.1" transform="rotate(120 763.2 836.3)"/><ellipse cx="751.4" cy="855.4" rx="9.2" ry="4.9" transform="rotate(137 751.4 855.4)"/><ellipse cx="737.5" cy="856.2" rx="7.0" ry="5.9" transform="rotate(145 737.5 856.2)"/><ellipse cx="722.2" cy="875.4" rx="7.4" ry="3.8" transform="rotate(143 722.2 875.4)"/><ellipse cx="720.6" cy="886.3" rx="8.7" ry="4.1" transform="rotate(120 720.6 886.3)"/><ellipse cx="718.8" cy="921.4" rx="5.7" ry="6.4" transform="rotate(93 718.8 921.4)"/><ellipse cx="719.5" cy="927.8" rx="4.1" ry="4.2" transform="rotate(61 719.5 927.8)"/><ellipse cx="735.4" cy="939.2" rx="6.9" ry="4.5" transform="rotate(69 735.4 939.2)"/><ellipse cx="735.7" cy="954.1" rx="4.8" ry="7.8" transform="rotate(67 735.7 954.1)"/><ellipse cx="742.7" cy="964.5" rx="7.9" ry="6.8" transform="rotate(79 742.7 964.5)"/><ellipse cx="745.7" cy="978.0" rx="8.8" ry="5.2" transform="rotate(62 745.7 978.0)"/><ellipse cx="752.8" cy="983.5" rx="6.9" ry="5.3" transform="rotate(100 752.8 983.5)"/><ellipse cx="492.0" cy="853.9" rx="3.7" ry="3.4" transform="rotate(15 492.0 853.9)"/><ellipse cx="495.6" cy="850.9" rx="3.3" ry="2.8" transform="rotate(23 495.6 850.9)"/><ellipse cx="514.2" cy="862.3" rx="2.9" ry="2.5" transform="rotate(1 514.2 862.3)"/><ellipse cx="532.2" cy="872.8" rx="4.4" ry="2.6" transform="rotate(46 532.2 872.8)"/><ellipse cx="540.2" cy="881.4" rx="2.3" ry="3.5" transform="rotate(9 540.2 881.4)"/><ellipse cx="552.2" cy="900.8" rx="2.3" ry="2.0" transform="rotate(1 552.2 900.8)"/><ellipse cx="564.7" cy="906.9" rx="2.6" ry="2.6" transform="rotate(-21 564.7 906.9)"/><ellipse cx="575.1" cy="910.4" rx="4.0" ry="3.5" transform="rotate(13 575.1 910.4)"/><ellipse cx="1088.3" cy="620.5" rx="5.4" ry="3.1" transform="rotate(-14 1088.3 620.5)"/><ellipse cx="1098.9" cy="609.9" rx="4.7" ry="2.6" transform="rotate(-15 1098.9 609.9)"/><ellipse cx="1115.4" cy="603.3" rx="5.5" ry="4.1" transform="rotate(-46 1115.4 603.3)"/><ellipse cx="1126.5" cy="595.7" rx="2.8" ry="2.7" transform="rotate(-32 1126.5 595.7)"/><ellipse cx="1127.8" cy="592.9" rx="3.3" ry="4.0" transform="rotate(7 1127.8 592.9)"/><ellipse cx="1139.3" cy="597.7" rx="4.6" ry="2.7" transform="rotate(-10 1139.3 597.7)"/><ellipse cx="1147.3" cy="593.0" rx="4.7" ry="2.3" transform="rotate(44 1147.3 593.0)"/><ellipse cx="1153.5" cy="595.9" rx="2.7" ry="3.8" transform="rotate(-12 1153.5 595.9)"/><ellipse cx="1006.5" cy="574.3" rx="4.1" ry="2.2" transform="rotate(27 1006.5 574.3)"/><ellipse cx="1008.9" cy="583.0" rx="4.8" ry="1.7" transform="rotate(42 1008.9 583.0)"/><ellipse cx="1014.7" cy="589.1" rx="3.4" ry="2.0" transform="rotate(49 1014.7 589.1)"/><ellipse cx="1021.0" cy="592.6" rx="4.2" ry="2.8" transform="rotate(45 1021.0 592.6)"/><ellipse cx="1028.3" cy="598.5" rx="4.7" ry="2.0" transform="rotate(67 1028.3 598.5)"/><ellipse cx="1033.5" cy="608.1" rx="4.2" ry="3.5" transform="rotate(93 1033.5 608.1)"/><ellipse cx="1037.5" cy="621.7" rx="3.4" ry="1.7" transform="rotate(77 1037.5 621.7)"/><ellipse cx="1038.9" cy="631.4" rx="2.5" ry="2.0" transform="rotate(31 1038.9 631.4)"/><ellipse cx="1044.0" cy="636.1" rx="2.7" ry="3.5" transform="rotate(35 1044.0 636.1)"/><ellipse cx="1046.1" cy="643.9" rx="4.2" ry="2.2" transform="rotate(41 1046.1 643.9)"/><ellipse cx="1057.9" cy="669.6" rx="3.6" ry="1.8" transform="rotate(95 1057.9 669.6)"/><ellipse cx="1075.8" cy="693.0" rx="2.2" ry="2.6" transform="rotate(23 1075.8 693.0)"/><ellipse cx="1084.3" cy="696.1" rx="4.1" ry="4.0" transform="rotate(5 1084.3 696.1)"/><ellipse cx="877.1" cy="1012.1" rx="4.0" ry="5.6" transform="rotate(-87 877.1 1012.1)"/><ellipse cx="883.0" cy="1010.5" rx="3.3" ry="2.5" transform="rotate(-18 883.0 1010.5)"/><ellipse cx="887.6" cy="999.3" rx="4.1" ry="4.4" transform="rotate(-79 887.6 999.3)"/><ellipse cx="894.1" cy="991.7" rx="4.4" ry="5.9" transform="rotate(-49 894.1 991.7)"/><ellipse cx="902.5" cy="978.8" rx="4.4" ry="4.9" transform="rotate(7 902.5 978.8)"/><ellipse cx="912.4" cy="979.4" rx="4.7" ry="5.4" transform="rotate(-32 912.4 979.4)"/><ellipse cx="914.1" cy="977.3" rx="3.8" ry="4.4" transform="rotate(-50 914.1 977.3)"/><ellipse cx="935.2" cy="969.7" rx="7.2" ry="4.8" transform="rotate(6 935.2 969.7)"/><ellipse cx="947.9" cy="967.3" rx="4.5" ry="3.4" transform="rotate(-61 947.9 967.3)"/><ellipse cx="971.4" cy="950.3" rx="4.1" ry="3.7" transform="rotate(-77 971.4 950.3)"/><ellipse cx="974.0" cy="948.1" rx="6.0" ry="5.7" transform="rotate(-88 974.0 948.1)"/><ellipse cx="983.6" cy="938.9" rx="4.4" ry="5.2" transform="rotate(-48 983.6 938.9)"/><ellipse cx="986.5" cy="921.0" rx="3.6" ry="4.5" transform="rotate(-99 986.5 921.0)"/><ellipse cx="996.1" cy="905.6" rx="6.0" ry="3.3" transform="rotate(-43 996.1 905.6)"/><ellipse cx="999.0" cy="901.8" rx="4.2" ry="5.0" transform="rotate(-69 999.0 901.8)"/><ellipse cx="1005.6" cy="890.1" rx="4.2" ry="3.6" transform="rotate(-84 1005.6 890.1)"/><ellipse cx="1021.3" cy="874.6" rx="7.1" ry="3.5" transform="rotate(-48 1021.3 874.6)"/><ellipse cx="1022.6" cy="870.5" rx="5.8" ry="5.8" transform="rotate(-10 1022.6 870.5)"/><ellipse cx="1032.0" cy="859.0" rx="4.6" ry="2.6" transform="rotate(-49 1032.0 859.0)"/><ellipse cx="1043.3" cy="845.8" rx="4.7" ry="4.1" transform="rotate(-66 1043.3 845.8)"/><ellipse cx="1049.7" cy="840.2" rx="4.4" ry="3.9" transform="rotate(-55 1049.7 840.2)"/><ellipse cx="1062.4" cy="839.4" rx="5.9" ry="2.5" transform="rotate(-35 1062.4 839.4)"/><ellipse cx="1064.3" cy="836.7" rx="3.2" ry="4.2" transform="rotate(-20 1064.3 836.7)"/><ellipse cx="1072.6" cy="830.7" rx="3.1" ry="3.6" transform="rotate(5 1072.6 830.7)"/><ellipse cx="1081.3" cy="831.4" rx="3.8" ry="4.1" transform="rotate(-17 1081.3 831.4)"/><ellipse cx="1088.7" cy="826.6" rx="7.0" ry="5.2" transform="rotate(-16 1088.7 826.6)"/><ellipse cx="1095.4" cy="821.3" rx="4.2" ry="5.4" transform="rotate(4 1095.4 821.3)"/><ellipse cx="1102.1" cy="811.7" rx="3.6" ry="4.2" transform="rotate(-56 1102.1 811.7)"/><ellipse cx="1109.1" cy="807.2" rx="3.8" ry="3.2" transform="rotate(-26 1109.1 807.2)"/><ellipse cx="1123.8" cy="795.9" rx="5.1" ry="4.7" transform="rotate(-37 1123.8 795.9)"/><ellipse cx="1134.8" cy="794.9" rx="7.1" ry="3.6" transform="rotate(-53 1134.8 794.9)"/><ellipse cx="1137.6" cy="787.9" rx="5.9" ry="4.9" transform="rotate(-47 1137.6 787.9)"/><ellipse cx="1137.3" cy="781.4" rx="5.1" ry="4.4" transform="rotate(-94 1137.3 781.4)"/><ellipse cx="1135.1" cy="763.2" rx="4.0" ry="3.6" transform="rotate(-109 1135.1 763.2)"/><ellipse cx="1133.8" cy="758.5" rx="3.3" ry="2.8" transform="rotate(-67 1133.8 758.5)"/><ellipse cx="1143.7" cy="741.0" rx="3.7" ry="5.5" transform="rotate(-15 1143.7 741.0)"/><ellipse cx="1158.2" cy="725.2" rx="6.0" ry="3.3" transform="rotate(-28 1158.2 725.2)"/><ellipse cx="1176.7" cy="713.3" rx="5.4" ry="3.9" transform="rotate(-28 1176.7 713.3)"/><ellipse cx="1181.5" cy="708.1" rx="3.5" ry="3.8" transform="rotate(-31 1181.5 708.1)"/><ellipse cx="1201.0" cy="685.5" rx="3.6" ry="4.9" transform="rotate(-60 1201.0 685.5)"/><ellipse cx="1202.6" cy="682.7" rx="7.2" ry="2.6" transform="rotate(-36 1202.6 682.7)"/><ellipse cx="1218.7" cy="651.9" rx="4.4" ry="2.5" transform="rotate(-38 1218.7 651.9)"/><ellipse cx="1222.2" cy="651.6" rx="6.4" ry="5.4" transform="rotate(-58 1222.2 651.6)"/><ellipse cx="1232.6" cy="649.1" rx="7.1" ry="3.8" transform="rotate(-26 1232.6 649.1)"/><ellipse cx="1234.9" cy="638.1" rx="3.7" ry="2.8" transform="rotate(-7 1234.9 638.1)"/><ellipse cx="1243.7" cy="633.0" rx="3.1" ry="4.4" transform="rotate(-70 1243.7 633.0)"/><ellipse cx="1250.0" cy="626.4" rx="5.0" ry="3.7" transform="rotate(-54 1250.0 626.4)"/><ellipse cx="1268.1" cy="611.8" rx="3.8" ry="4.1" transform="rotate(5 1268.1 611.8)"/><ellipse cx="1283.7" cy="605.3" rx="6.4" ry="3.8" transform="rotate(-70 1283.7 605.3)"/><ellipse cx="1292.4" cy="602.0" rx="4.2" ry="5.8" transform="rotate(-6 1292.4 602.0)"/><ellipse cx="1298.6" cy="600.4" rx="6.0" ry="3.0" transform="rotate(-73 1298.6 600.4)"/><ellipse cx="1325.5" cy="581.9" rx="5.2" ry="2.4" transform="rotate(-46 1325.5 581.9)"/><ellipse cx="1328.2" cy="583.2" rx="6.4" ry="5.3" transform="rotate(-4 1328.2 583.2)"/><ellipse cx="1342.0" cy="580.8" rx="6.2" ry="5.9" transform="rotate(-55 1342.0 580.8)"/><ellipse cx="1345.7" cy="577.8" rx="4.1" ry="5.7" transform="rotate(-61 1345.7 577.8)"/><ellipse cx="1350.1" cy="572.2" rx="4.6" ry="4.8" transform="rotate(2 1350.1 572.2)"/><ellipse cx="1359.8" cy="567.6" rx="4.2" ry="5.7" transform="rotate(-37 1359.8 567.6)"/></g><g fill="#c9e5c0"><rect x="489.7" y="901.2" width="5.5" height="7.5" transform="rotate(-4 489.7 901.2)"/><rect x="884.5" y="641.6" width="4.7" height="3.9" transform="rotate(-9 884.5 641.6)"/><rect x="599.3" y="564.3" width="7.5" height="5.4" transform="rotate(-10 599.3 564.3)"/><rect x="721.0" y="998.1" width="5.4" height="8.3" transform="rotate(-10 721.0 998.1)"/><rect x="969.0" y="609.8" width="10.9" height="5.6" transform="rotate(9 969.0 609.8)"/><rect x="358.0" y="747.8" width="8.9" height="4.1" transform="rotate(-12 358.0 747.8)"/><rect x="881.1" y="995.9" width="6.3" height="4.1" transform="rotate(-9 881.1 995.9)"/><rect x="1238.0" y="628.1" width="8.4" height="5.3" transform="rotate(-1 1238.0 628.1)"/><rect x="349.6" y="843.5" width="10.2" height="8.1" transform="rotate(-1 349.6 843.5)"/><rect x="684.0" y="821.2" width="4.8" height="8.0" transform="rotate(1 684.0 821.2)"/><rect x="625.0" y="866.1" width="6.9" height="5.3" transform="rotate(-13 625.0 866.1)"/><rect x="793.6" y="823.5" width="7.6" height="3.2" transform="rotate(-1 793.6 823.5)"/><rect x="617.7" y="832.9" width="8.2" height="8.6" transform="rotate(-15 617.7 832.9)"/><rect x="642.7" y="1016.7" width="9.2" height="4.9" transform="rotate(2 642.7 1016.7)"/><rect x="1098.5" y="618.3" width="10.9" height="5.9" transform="rotate(-13 1098.5 618.3)"/><rect x="1018.7" y="795.3" width="11.0" height="3.4" transform="rotate(6 1018.7 795.3)"/><rect x="920.4" y="675.3" width="9.7" height="5.7" transform="rotate(-4 920.4 675.3)"/><rect x="1096.3" y="650.2" width="6.0" height="6.9" transform="rotate(-18 1096.3 650.2)"/><rect x="741.4" y="922.1" width="7.4" height="4.5" transform="rotate(4 741.4 922.1)"/><rect x="734.8" y="976.6" width="9.6" height="3.9" transform="rotate(-9 734.8 976.6)"/><rect x="221.7" y="576.9" width="6.4" height="8.2" transform="rotate(5 221.7 576.9)"/><rect x="241.2" y="643.6" width="6.7" height="8.1" transform="rotate(-1 241.2 643.6)"/><rect x="1137.8" y="593.1" width="10.9" height="4.2" transform="rotate(-1 1137.8 593.1)"/><rect x="332.2" y="867.5" width="7.0" height="3.1" transform="rotate(-10 332.2 867.5)"/><rect x="467.4" y="849.7" width="5.9" height="6.6" transform="rotate(1 467.4 849.7)"/><rect x="313.5" y="618.9" width="8.9" height="5.8" transform="rotate(-16 313.5 618.9)"/><rect x="239.6" y="992.9" width="8.3" height="5.1" transform="rotate(-14 239.6 992.9)"/><rect x="948.5" y="725.7" width="6.2" height="5.4" transform="rotate(-16 948.5 725.7)"/><rect x="828.5" y="755.4" width="9.7" height="5.5" transform="rotate(-6 828.5 755.4)"/><rect x="685.9" y="993.2" width="6.4" height="7.2" transform="rotate(-13 685.9 993.2)"/><rect x="769.1" y="691.0" width="10.1" height="4.7" transform="rotate(6 769.1 691.0)"/><rect x="880.4" y="769.3" width="10.5" height="5.3" transform="rotate(2 880.4 769.3)"/><rect x="794.2" y="766.3" width="4.4" height="5.5" transform="rotate(-12 794.2 766.3)"/><rect x="610.9" y="999.1" width="6.1" height="7.2" transform="rotate(0 610.9 999.1)"/><rect x="386.7" y="749.3" width="4.9" height="8.4" transform="rotate(-12 386.7 749.3)"/><rect x="587.8" y="717.1" width="9.7" height="8.1" transform="rotate(-2 587.8 717.1)"/><rect x="731.0" y="605.7" width="10.3" height="3.5" transform="rotate(-9 731.0 605.7)"/><rect x="535.0" y="892.6" width="8.7" height="5.1" transform="rotate(7 535.0 892.6)"/><rect x="1192.5" y="570.7" width="8.4" height="5.8" transform="rotate(-9 1192.5 570.7)"/><rect x="638.3" y="705.4" width="8.7" height="6.6" transform="rotate(9 638.3 705.4)"/><rect x="558.6" y="941.2" width="8.5" height="7.2" transform="rotate(10 558.6 941.2)"/><rect x="183.1" y="772.6" width="6.8" height="6.9" transform="rotate(-13 183.1 772.6)"/><rect x="1238.3" y="656.3" width="6.6" height="3.9" transform="rotate(-8 1238.3 656.3)"/><rect x="954.9" y="598.4" width="5.2" height="6.9" transform="rotate(-1 954.9 598.4)"/><rect x="955.1" y="676.6" width="9.7" height="7.4" transform="rotate(3 955.1 676.6)"/><rect x="243.8" y="775.6" width="4.1" height="8.2" transform="rotate(8 243.8 775.6)"/><rect x="1130.9" y="571.1" width="6.5" height="6.2" transform="rotate(-4 1130.9 571.1)"/><rect x="234.1" y="923.0" width="6.1" height="6.0" transform="rotate(-16 234.1 923.0)"/><rect x="756.1" y="619.7" width="4.6" height="6.1" transform="rotate(-11 756.1 619.7)"/><rect x="995.7" y="673.5" width="6.9" height="3.3" transform="rotate(-13 995.7 673.5)"/><rect x="623.3" y="816.7" width="7.2" height="8.1" transform="rotate(-17 623.3 816.7)"/><rect x="1078.7" y="631.2" width="10.8" height="6.1" transform="rotate(-8 1078.7 631.2)"/><rect x="806.7" y="957.4" width="10.7" height="5.5" transform="rotate(-20 806.7 957.4)"/><rect x="282.7" y="936.5" width="9.1" height="7.3" transform="rotate(-15 282.7 936.5)"/><rect x="714.0" y="573.1" width="4.8" height="4.8" transform="rotate(9 714.0 573.1)"/><rect x="842.0" y="949.9" width="4.3" height="5.5" transform="rotate(-18 842.0 949.9)"/><rect x="405.1" y="611.4" width="10.4" height="5.0" transform="rotate(-5 405.1 611.4)"/><rect x="854.5" y="967.9" width="10.6" height="6.4" transform="rotate(-5 854.5 967.9)"/><rect x="1140.1" y="741.4" width="6.1" height="7.4" transform="rotate(-12 1140.1 741.4)"/><rect x="527.5" y="757.5" width="7.3" height="5.2" transform="rotate(-7 527.5 757.5)"/><rect x="622.3" y="582.8" width="9.8" height="3.4" transform="rotate(-4 622.3 582.8)"/><rect x="732.8" y="743.9" width="5.6" height="3.6" transform="rotate(-9 732.8 743.9)"/><rect x="466.4" y="782.6" width="5.6" height="7.5" transform="rotate(-5 466.4 782.6)"/><rect x="117.2" y="747.0" width="10.8" height="3.0" transform="rotate(-2 117.2 747.0)"/><rect x="790.6" y="729.7" width="6.1" height="6.7" transform="rotate(-2 790.6 729.7)"/><rect x="467.2" y="788.9" width="7.6" height="7.5" transform="rotate(-18 467.2 788.9)"/><rect x="213.1" y="675.9" width="5.9" height="7.8" transform="rotate(-7 213.1 675.9)"/><rect x="1090.0" y="745.1" width="6.0" height="7.1" transform="rotate(-17 1090.0 745.1)"/><rect x="482.1" y="706.0" width="9.7" height="7.7" transform="rotate(-1 482.1 706.0)"/><rect x="171.9" y="911.2" width="4.3" height="6.7" transform="rotate(-3 171.9 911.2)"/><rect x="132.5" y="989.8" width="9.3" height="6.5" transform="rotate(-20 132.5 989.8)"/><rect x="949.3" y="752.4" width="8.8" height="8.9" transform="rotate(8 949.3 752.4)"/><rect x="192.7" y="919.4" width="7.1" height="7.5" transform="rotate(-9 192.7 919.4)"/><rect x="618.7" y="761.0" width="4.8" height="4.9" transform="rotate(2 618.7 761.0)"/><rect x="188.7" y="613.3" width="9.8" height="7.0" transform="rotate(-4 188.7 613.3)"/><rect x="236.4" y="614.5" width="6.2" height="8.7" transform="rotate(-3 236.4 614.5)"/><rect x="1161.2" y="657.1" width="6.9" height="6.2" transform="rotate(5 1161.2 657.1)"/><rect x="248.0" y="961.9" width="7.3" height="3.2" transform="rotate(-7 248.0 961.9)"/><rect x="538.5" y="870.2" width="10.5" height="6.0" transform="rotate(1 538.5 870.2)"/><rect x="550.5" y="918.2" width="4.7" height="7.5" transform="rotate(-15 550.5 918.2)"/><rect x="776.6" y="653.0" width="6.4" height="4.0" transform="rotate(-10 776.6 653.0)"/><rect x="783.0" y="799.2" width="6.7" height="6.4" transform="rotate(5 783.0 799.2)"/><rect x="516.5" y="828.6" width="7.4" height="8.9" transform="rotate(-10 516.5 828.6)"/><rect x="904.2" y="667.4" width="5.8" height="7.4" transform="rotate(-3 904.2 667.4)"/><rect x="400.8" y="589.5" width="9.8" height="5.3" transform="rotate(1 400.8 589.5)"/><rect x="601.6" y="844.1" width="7.9" height="8.9" transform="rotate(7 601.6 844.1)"/><rect x="628.0" y="783.9" width="5.6" height="7.5" transform="rotate(-17 628.0 783.9)"/><rect x="457.4" y="949.8" width="4.2" height="7.2" transform="rotate(-3 457.4 949.8)"/><rect x="737.4" y="713.2" width="5.1" height="8.7" transform="rotate(3 737.4 713.2)"/><rect x="1028.0" y="604.9" width="9.5" height="4.3" transform="rotate(-14 1028.0 604.9)"/><rect x="718.5" y="840.5" width="4.8" height="7.6" transform="rotate(-3 718.5 840.5)"/><rect x="894.8" y="727.4" width="10.7" height="7.3" transform="rotate(-11 894.8 727.4)"/><rect x="409.6" y="674.6" width="4.1" height="6.2" transform="rotate(-12 409.6 674.6)"/><rect x="441.9" y="676.3" width="4.9" height="5.9" transform="rotate(-12 441.9 676.3)"/><rect x="432.8" y="687.7" width="7.6" height="8.2" transform="rotate(-15 432.8 687.7)"/><rect x="803.5" y="810.1" width="9.1" height="6.2" transform="rotate(-0 803.5 810.1)"/><rect x="404.0" y="585.0" width="10.6" height="5.2" transform="rotate(4 404.0 585.0)"/><rect x="373.8" y="768.3" width="6.6" height="7.4" transform="rotate(8 373.8 768.3)"/><rect x="685.0" y="820.4" width="6.4" height="4.4" transform="rotate(8 685.0 820.4)"/><rect x="233.0" y="992.6" width="8.6" height="3.4" transform="rotate(7 233.0 992.6)"/><rect x="223.6" y="820.1" width="4.8" height="8.9" transform="rotate(-11 223.6 820.1)"/><rect x="1103.8" y="588.3" width="8.7" height="3.4" transform="rotate(-19 1103.8 588.3)"/><rect x="759.6" y="1012.1" width="8.8" height="8.1" transform="rotate(4 759.6 1012.1)"/><rect x="702.7" y="595.5" width="7.7" height="4.1" transform="rotate(-4 702.7 595.5)"/><rect x="511.9" y="789.5" width="5.4" height="7.2" transform="rotate(-7 511.9 789.5)"/><rect x="662.4" y="596.2" width="7.4" height="6.3" transform="rotate(9 662.4 596.2)"/><rect x="748.7" y="622.1" width="6.1" height="5.0" transform="rotate(1 748.7 622.1)"/><rect x="130.1" y="785.3" width="8.1" height="7.1" transform="rotate(-2 130.1 785.3)"/><rect x="807.8" y="989.3" width="4.6" height="6.1" transform="rotate(9 807.8 989.3)"/><rect x="143.4" y="611.4" width="10.1" height="8.7" transform="rotate(-19 143.4 611.4)"/><rect x="143.5" y="941.7" width="8.8" height="6.1" transform="rotate(-3 143.5 941.7)"/><rect x="972.7" y="931.6" width="4.0" height="3.4" transform="rotate(4 972.7 931.6)"/><rect x="572.9" y="714.3" width="6.4" height="3.1" transform="rotate(3 572.9 714.3)"/><rect x="406.8" y="829.4" width="7.7" height="5.0" transform="rotate(0 406.8 829.4)"/><rect x="627.0" y="667.8" width="10.2" height="4.1" transform="rotate(-16 627.0 667.8)"/><rect x="396.7" y="780.3" width="9.5" height="5.0" transform="rotate(-13 396.7 780.3)"/><rect x="854.9" y="679.7" width="7.7" height="4.5" transform="rotate(6 854.9 679.7)"/><rect x="317.9" y="666.8" width="6.1" height="5.0" transform="rotate(2 317.9 666.8)"/><rect x="877.5" y="923.5" width="7.8" height="3.5" transform="rotate(3 877.5 923.5)"/><rect x="386.4" y="660.2" width="6.9" height="8.9" transform="rotate(-9 386.4 660.2)"/><rect x="514.4" y="979.1" width="10.9" height="5.3" transform="rotate(-16 514.4 979.1)"/></g><path d="M229.4 930.6 L276.4 926.0 L285.8 968.0 L271.7 991.8 L238.8 991.8 L229.4 958.8 Z" fill="#c9e5c0"/><path d="M126.0 794.0 L177.6 800.0 L185.0 827.0 L140.0 827.0 Z" fill="#c9e5c0"/><path d="M474.0 587.0 L535.0 590.0 L540.0 623.0 L480.0 620.0 Z" fill="#c9e5c0"/><path d="M585.0 661.0 L641.0 666.0 L641.0 695.0 L590.0 690.0 Z" fill="#c9e5c0"/><path d="M747.0 700.0 L800.0 690.0 L840.0 700.0 L870.0 700.0 L860.0 740.0 L830.0 760.0 L800.0 790.0 L750.0 790.0 Z" fill="#c9e5c0"/><path d="M608.0 839.0 L674.0 835.0 L674.0 857.0 L610.0 860.0 Z" fill="#c9e5c0"/><path d="M1202.0 560.0 L1225.0 560.0 L1225.0 587.0 L1202.0 587.0 Z" fill="#c9e5c0"/><path d="M1175.0 582.0 L1193.0 582.0 L1193.0 614.0 L1175.0 614.0 Z" fill="#c9e5c0"/><path d="M909.0 668.0 L934.0 668.0 L934.0 700.0 L909.0 700.0 Z" fill="#c9e5c0"/><path d="M1008.0 727.0 L1042.0 727.0 L1042.0 763.0 L1008.0 763.0 Z" fill="#c9e5c0"/><path d="M1180.0 600.0 L1230.0 600.0 L1240.0 640.0 L1190.0 650.0 Z" fill="#c9e5c0"/><path d="M1130.0 630.0 L1160.0 640.0 L1150.0 690.0 L1120.0 680.0 Z" fill="#c9e5c0"/><path d="M1050.0 780.0 L1090.0 770.0 L1100.0 800.0 L1060.0 820.0 Z" fill="#c9e5c0"/><path d="M920.0 900.0 L945.0 895.0 L955.0 930.0 L925.0 935.0 Z" fill="#c9e5c0"/><path d="M690.0 840.0 L720.0 835.0 L735.0 880.0 L700.0 885.0 Z" fill="#c9e5c0"/><path d="M420.0 700.0 L445.0 700.0 L450.0 760.0 L425.0 760.0 Z" fill="#c9e5c0"/><path d="M330.0 600.0 L370.0 590.0 L380.0 640.0 L340.0 650.0 Z" fill="#c9e5c0"/><path d="M355.0 880.0 L380.0 875.0 L385.0 905.0 L360.0 910.0 Z" fill="#c9e5c0"/><path d="M857.0 637.0 L891.0 630.0 L893.0 640.0 L860.0 646.0 Z" fill="#f8f0d8"/><path d="M923.0 713.0 L952.0 708.0 L955.0 728.0 L925.0 733.0 Z" fill="#f8f0d8"/><path d="M972.0 605.0 L986.0 602.0 L988.0 614.0 L974.0 617.0 Z" fill="#f8f0d8"/><path d="M1014.0 596.0 L1030.0 592.0 L1032.0 606.0 L1016.0 610.0 Z" fill="#f8f0d8"/><path d="M1120.0 575.0 L1135.0 572.0 L1137.0 585.0 L1122.0 588.0 Z" fill="#f8f0d8"/><path d="M640.0 975.0 L652.0 972.0 L655.0 990.0 L643.0 993.0 Z" fill="#f8f0d8"/><path d="M660.0 1000.0 L672.0 998.0 L674.0 1012.0 L662.0 1014.0 Z" fill="#f8f0d8"/><path d="M600.0 1005.0 L615.0 1002.0 L617.0 1015.0 L602.0 1018.0 Z" fill="#f8f0d8"/><path d="M590.0 940.0 L610.0 936.0 L612.0 950.0 L592.0 954.0 Z" fill="#f8f0d8"/><path d="M141.0 622.0 L160.0 618.0 L162.0 630.0 L143.0 634.0 Z" fill="#f8f0d8"/><path d="M440.5 560.0 L449.6 593.8 L447.3 677.3 L444.0 760.0 M469.8 560.0 L481.1 627.7 L494.7 699.8 L508.2 790.0 M524.0 650.2 L533.0 686.3 L553.3 751.7 L562.3 790.0 L549.4 874.1 L565.8 921.2 L577.6 968.2 L589.4 1020.0 M560.0 569.0 L573.6 636.7 L584.9 695.3 L598.4 790.0 L587.0 867.0 L596.4 921.2 L615.2 991.8 L622.3 1020.0 M575.8 722.4 L584.9 751.7 L589.4 790.0 M591.6 681.8 L602.9 713.4 L618.7 763.0 L625.5 790.0 L638.8 850.6 L650.5 921.2 L669.4 980.0 L676.4 1020.0 M634.5 560.0 L643.5 616.4 L650.3 661.5 L650.3 706.6 L659.3 729.2 L666.0 790.0 L681.1 850.6 L692.9 897.6 M711.2 560.0 L720.2 593.8 L729.2 672.8 L747.0 717.9 M688.6 623.0 L690.9 650.2 L706.7 668.3 L727.0 677.3 M455.2 780.0 L483.5 921.2 L504.6 1020.0 M507.0 780.0 L516.4 838.8 L530.5 902.4 L551.7 982.4 L558.8 1020.0 M758.3 560.0 L760.5 627.7 L769.6 684.0 L780.8 763.0 L785.3 790.0 M853.0 560.0 L864.3 593.8 L877.8 650.2 L895.9 717.9 L909.4 763.0 L918.4 790.0 L923.5 780.0 L940.0 838.8 L954.0 897.6 M873.3 569.0 L893.6 639.0 L913.9 695.3 L934.2 763.0 L941.0 790.0 L958.8 780.0 M904.9 573.5 L923.0 627.7 L943.2 686.3 L961.3 740.4 L972.5 790.0 L987.0 897.6 M934.2 560.0 L954.5 618.6 L974.8 686.3 L995.1 751.7 L1001.9 790.0 L1015.0 850.0 M968.0 560.0 L986.0 627.7 L1008.6 695.3 L1028.9 751.7 L1040.2 790.0 L1048.0 830.0 M1008.6 560.0 L1024.4 627.7 L1044.7 695.3 L1067.0 751.7 M1038.0 560.0 L1053.7 616.4 L1067.0 661.5 L1080.0 720.0 M873.3 661.5 L868.8 672.8 L873.3 706.6 L857.5 740.4 L864.3 763.0 L875.6 790.0 M747.0 841.2 L761.1 921.2 L770.5 968.2 L777.6 1020.0 M777.6 850.6 L794.0 921.2 L808.2 980.0 L817.6 1020.0 M812.9 838.8 L824.6 897.6 L841.1 968.2 L848.2 1020.0 M845.8 827.0 L859.9 874.1 L874.1 933.0 L878.8 968.2 M885.8 838.8 L897.6 874.1 L911.7 933.0 M916.4 803.5 L911.7 850.6 L916.4 885.9 L940.0 897.6 L958.8 921.2 M1073.8 560.0 L1076.0 627.7 L1073.8 695.3 L1089.6 740.4 L1094.0 790.0 M1103.0 560.0 L1123.4 627.7 L1141.4 695.3 M1137.0 560.0 L1150.4 616.4 L1161.7 661.5 L1173.0 672.8 M1166.2 560.0 L1179.8 605.0 L1193.3 627.7 M1270.0 560.0 L1281.3 600.6 L1247.4 616.4 L1202.3 627.7 L1195.0 640.0 M1224.9 560.0 L1236.0 593.8 M121.0 794.0 L177.6 1020.0 M172.9 822.4 L201.1 911.8 L238.8 1020.0 M267.0 780.0 L281.1 869.4 L311.7 1020.0 M351.7 780.0 L358.8 862.4 L384.6 1020.0 M107.0 921.2 L147.0 1020.0 M238.8 850.6 L260.0 921.2 L283.5 980.0 L295.2 1020.0 M177.6 803.5 L271.7 862.4 L342.3 897.6 L365.8 933.0 L398.8 968.2 L427.0 1000.0 M140.8 560.0 L145.3 582.5 M224.3 560.0 L228.8 582.5 M278.4 560.0 L283.0 582.5 M346.0 560.0 L350.6 582.5 M389.0 560.0 L393.4 582.5 M136.3 756.0 L140.8 790.0 M262.6 756.0 L264.9 790.0 M343.8 756.0 L348.3 790.0 M377.6 756.0 L384.4 790.0 L395.0 830.0 L405.0 880.0 L420.0 960.0 L430.0 1020.0 M107.0 750.0 L152.0 1020.0 M420.0 560.0 L425.0 585.0 M442.8 596.0 L521.7 573.5 L566.8 565.6 L598.4 560.0 M442.8 677.3 L571.3 636.7 L652.5 615.3 L747.0 589.3 L787.6 577.0 L844.0 578.0 L864.3 575.8 L900.0 567.0 L930.0 560.0 M442.8 722.4 L494.7 713.4 M427.0 765.2 L580.4 720.1 L636.7 704.3 L652.5 707.7 L747.0 677.3 L814.7 650.2 L873.3 645.7 L922.9 632.2 L983.8 614.0 L1067.0 589.3 L1134.7 573.5 L1202.3 560.0 M505.9 772.0 L652.5 747.2 L747.0 731.4 L792.1 736.0 L848.5 715.6 L895.9 720.1 L972.5 695.3 L1067.0 659.2 L1116.6 648.0 L1175.3 636.7 M652.5 666.0 L679.6 663.8 L747.0 686.3 M427.0 817.6 L544.6 798.8 L662.3 780.0 L747.0 765.0 L882.3 785.5 M482.0 832.0 L608.0 806.7 L733.7 781.6 L790.0 771.0 M882.3 785.5 L995.1 754.0 L1067.0 731.4 L1123.4 722.4 L1150.0 716.0 M427.0 893.0 L521.1 874.0 L643.5 851.0 L747.0 832.0 L817.6 817.6 L874.1 803.5 L958.8 787.0 L982.3 780.0 L1067.0 760.0 M427.0 933.0 L549.4 902.4 L662.3 885.9 L747.0 869.4 L817.6 857.6 L874.1 841.2 M427.0 954.0 L568.2 930.6 L662.3 911.8 L747.0 890.6 L841.1 878.8 L911.7 869.4 L1005.8 848.2 L1067.0 827.0 M427.0 973.0 L591.7 949.4 L747.0 921.2 L864.6 907.0 L958.8 885.9 M485.8 1010.6 L627.0 982.4 L747.0 968.2 L864.6 949.4 L958.8 933.0 M747.0 998.8 L888.2 968.2 L958.8 954.0 M107.0 848.2 L196.4 823.5 L271.7 815.3 L351.7 787.0 L384.6 780.0 L427.0 765.0 M107.0 890.6 L177.6 878.8 M107.0 930.6 L210.5 902.4 L309.4 883.5 L427.0 850.6 M107.0 987.0 L215.2 954.0 L342.3 930.6 L427.0 914.0 M107.0 1017.6 L224.6 991.8 L285.8 975.3 L427.0 958.8 M107.0 611.9 L133.0 605.0 M107.0 686.3 L133.0 679.5 M192.7 573.5 L264.9 569.0 L343.8 560.0 M228.8 785.5 L330.0 765.0 L427.0 740.4 M107.0 850.0 L207.0 824.0 M239.0 574.7 L299.0 560.6 M107.0 563.0 L140.0 580.0" fill="none" stroke="#ffffff" stroke-width="2.6" stroke-linejoin="round"/><path d="M104.9 560 L242.9 1020 M124.8 560 L262.8 1020 M152.8 560 L290.8 1020 M167.9 560 L305.9 1020 M195.4 560 L333.4 1020 M215.4 560 L353.4 1020 M233.7 560 L371.7 1020 M261.1 560 L399.1 1020 M277.4 560 L415.4 1020 M304.2 560 L442.2 1020 M321.8 560 L459.8 1020 M344.1 560 L482.1 1020 M370.1 560 L508.1 1020 M396.9 560 L534.9 1020 M410.5 560 L548.5 1020 M433.7 560 L571.7 1020 M460.5 560 L598.5 1020 M486.4 560 L624.4 1020 M503.9 560 L641.9 1020 M523.8 560 L661.8 1020 M552.7 560 L690.7 1020 M563.6 560 L701.6 1020 M595.3 560 L733.3 1020 M610.5 560 L748.5 1020 M630.7 560 L768.7 1020 M652.4 560 L790.4 1020 M676.7 560 L814.7 1020 M704.8 560 L842.8 1020 M719.2 560 L857.2 1020 M746.0 560 L884.0 1020 M768.7 560 L906.7 1020 M787.5 560 L925.5 1020 M811.6 560 L949.6 1020 M827.8 560 L965.8 1020 M849.7 560 L987.7 1020 M873.5 560 L1011.5 1020 M901.2 560 L1039.2 1020 M920.1 560 L1058.1 1020 M940.8 560 L1078.8 1020 M966.0 560 L1104.0 1020 M986.4 560 L1124.4 1020 M1006.6 560 L1144.6 1020 M1034.5 560 L1172.5 1020 M1055.4 560 L1193.4 1020 M1071.9 560 L1209.9 1020 M1097.9 560 L1235.9 1020 M1119.3 560 L1257.3 1020 M1145.5 560 L1283.5 1020 M1165.8 560 L1303.8 1020 M1182.5 560 L1320.5 1020 M1212.8 560 L1350.8 1020 M1224.4 560 L1362.4 1020 M1250.0 560 L1388.0 1020 M1276.1 560 L1414.1 1020 M1290.8 560 L1428.8 1020 M1316.9 560 L1454.9 1020 M1333.5 560 L1471.5 1020 M1363.0 560 L1501.0 1020 M1386.2 560 L1524.2 1020 M1405.9 560 L1543.9 1020 M107 623.8 L1400 313.4 M107 638.1 L1400 327.8 M107 662.0 L1400 351.6 M107 680.9 L1400 370.6 M107 700.8 L1400 390.5 M107 719.6 L1400 409.2 M107 743.4 L1400 433.1 M107 764.4 L1400 454.1 M107 779.7 L1400 469.4 M107 801.6 L1400 491.3 M107 815.6 L1400 505.3 M107 842.0 L1400 531.7 M107 861.5 L1400 551.2 M107 884.9 L1400 574.6 M107 903.2 L1400 592.9 M107 917.8 L1400 607.5 M107 938.9 L1400 628.5 M107 961.7 L1400 651.4 M107 975.2 L1400 664.9 M107 999.6 L1400 689.3 M107 1016.7 L1400 706.4 M107 1036.2 L1400 725.9 M107 1055.6 L1400 745.3 M107 1082.7 L1400 772.4 M107 1096.3 L1400 786.0 M107 1117.5 L1400 807.2 M107 1138.9 L1400 828.6 M107 1163.7 L1400 853.4 M107 1175.8 L1400 865.5 M107 1199.5 L1400 889.2 M107 1220.5 L1400 910.2 M107 1243.8 L1400 933.5 M107 1263.2 L1400 952.9 M107 1283.6 L1400 973.3 M107 1297.8 L1400 987.5 M107 1319.2 L1400 1008.8 M107 1338.6 L1400 1028.3 M107 1363.8 L1400 1053.5 M107 1384.6 L1400 1074.3 M107 1396.5 L1400 1086.2" fill="none" stroke="#ffffff" stroke-width="1" stroke-opacity="0.3"/><path d="M560 900 L592.4 1020 M580 900 L612.4 1020 M600 900 L632.4 1020 M620 900 L652.4 1020 M640 900 L672.4 1020 M660 900 L692.4 1020 M680 900 L712.4 1020 M700 900 L732.4 1020 M720 900 L752.4 1020 M540 960.0 L745 910.0 M540 977.0 L745 927.0 M540 994.0 L745 944.0 M540 1011.0 L745 961.0 M540 1028.0 L745 978.0 M540 1045.0 L745 995.0" fill="none" stroke="#ffffff" stroke-width="1.6" stroke-opacity="0.85"/><path d="M107.0 794.5 L122.9 784.4 L165.6 767.5 L242.0 758.5 L300.0 745.0 L360.0 725.0 L443.0 693.0 L481.0 675.0 L517.2 643.4 L544.3 616.4 L571.3 589.3 L598.4 569.0 L623.2 560.0 M242.0 758.5 L265.0 772.0 L275.0 790.0 M179.0 560.0 L183.7 586.0 M444.0 706.6 L447.3 740.4 L454.0 763.0 L465.3 790.0 L474.0 808.0 L482.3 831.8 M789.9 560.0 L798.9 605.0 L805.6 650.2 L812.4 717.9 L826.0 756.2 L826.0 774.3 L817.6 780.0 L805.8 808.2 L789.4 827.0 L761.1 836.5 L747.0 838.8 L716.4 864.7 L711.7 893.0 L714.0 925.9 L730.5 963.5 L739.9 1015.3 L742.0 1020.0 M1233.9 560.0 L1202.3 609.6 L1173.0 650.2 L1141.4 690.8 L1107.6 731.4 L1079.6 760.0 L1054.0 811.0 L1023.5 857.0 L992.9 885.0 L957.0 909.2 L924.0 913.0 L901.0 920.7 L883.0 933.0" fill="none" stroke="#f3c655" stroke-width="4.2" stroke-linejoin="round"/><path d="M107.0 794.5 L122.9 784.4 L165.6 767.5 L242.0 758.5 L300.0 745.0 L360.0 725.0 L443.0 693.0 L481.0 675.0 L517.2 643.4 L544.3 616.4 L571.3 589.3 L598.4 569.0 L623.2 560.0 M242.0 758.5 L265.0 772.0 L275.0 790.0 M179.0 560.0 L183.7 586.0 M444.0 706.6 L447.3 740.4 L454.0 763.0 L465.3 790.0 L474.0 808.0 L482.3 831.8 M789.9 560.0 L798.9 605.0 L805.6 650.2 L812.4 717.9 L826.0 756.2 L826.0 774.3 L817.6 780.0 L805.8 808.2 L789.4 827.0 L761.1 836.5 L747.0 838.8 L716.4 864.7 L711.7 893.0 L714.0 925.9 L730.5 963.5 L739.9 1015.3 L742.0 1020.0 M1233.9 560.0 L1202.3 609.6 L1173.0 650.2 L1141.4 690.8 L1107.6 731.4 L1079.6 760.0 L1054.0 811.0 L1023.5 857.0 L992.9 885.0 L957.0 909.2 L924.0 913.0 L901.0 920.7 L883.0 933.0" fill="none" stroke="#fcdc7a" stroke-width="2.4" stroke-linejoin="round"/><path d="M107.0 794.5 L122.9 784.4 L165.6 767.5 L242.0 758.5 L300.0 745.0 L360.0 725.0 L443.0 693.0 L481.0 675.0 L517.2 643.4 L544.3 616.4 L571.3 589.3 L598.4 569.0 L623.2 560.0 M242.0 758.5 L265.0 772.0 L275.0 790.0 M179.0 560.0 L183.7 586.0" fill="none" stroke="#f1c04a" stroke-width="7.5" stroke-linejoin="round"/><path d="M107.0 794.5 L122.9 784.4 L165.6 767.5 L242.0 758.5 L300.0 745.0 L360.0 725.0 L443.0 693.0 L481.0 675.0 L517.2 643.4 L544.3 616.4 L571.3 589.3 L598.4 569.0 L623.2 560.0 M242.0 758.5 L265.0 772.0 L275.0 790.0 M179.0 560.0 L183.7 586.0" fill="none" stroke="#fcd86a" stroke-width="5.5" stroke-linejoin="round"/><path d="M1374.0 560.0 L1337.6 584.8 L1292.5 598.3 L1270.0 611.9 L1247.4 627.7 L1229.4 650.2 L1211.3 659.2 L1193.3 679.5 L1175.3 706.6 L1161.7 726.9 L1141.4 745.0 L1134.7 763.0 L1138.0 773.0 L1135.7 793.0 L1105.0 813.6 L1079.6 823.8 L1054.0 839.0 L1033.7 854.0 L1015.8 880.0 L998.0 905.0 L987.8 925.8" fill="none" stroke="#c9e5c0" stroke-width="22" stroke-linejoin="round" stroke-opacity="0.85"/><path d="M1374.0 560.0 L1337.6 584.8 L1292.5 598.3 L1270.0 611.9 L1247.4 627.7 L1229.4 650.2 L1211.3 659.2 L1193.3 679.5 L1175.3 706.6 L1161.7 726.9 L1141.4 745.0 L1134.7 763.0 L1138.0 773.0 L1135.7 793.0 L1105.0 813.6 L1079.6 823.8 L1054.0 839.0 L1033.7 854.0 L1015.8 880.0 L998.0 905.0 L987.8 925.8 L972.4 948.8 L957.0 956.0 L901.0 974.0 L883.0 989.6 L878.0 1000.0 L876.0 1020.0 L1882 1020 L1882 560 Z" fill="#aadaff"/><path d="M852 1000 L868 996 L872 1020 L850 1020 Z" fill="#aadaff"/><path d="M880 995 L890 975 L905 968 L895 990 Z" fill="#f6e7b9"/></g></svg>
<svg style="left:0;top:0" width="1920" height="1020" viewBox="0 0 1920 1020"><g clip-path="url(#mapclip)" font-family="Liberation Sans, sans-serif"><text x="226.0" y="584.3" font-size="10" font-weight="bold" letter-spacing="1.2" text-anchor="middle" fill="#7c8ba6" stroke="#fff" stroke-width="2.5" stroke-linejoin="round" paint-order="stroke" textLength="93.6" lengthAdjust="spacingAndGlyphs">JANE AND FINCH</text><text x="467.1" y="621.1" font-size="10" font-weight="bold" letter-spacing="1.2" text-anchor="middle" fill="#7c8ba6" stroke="#fff" stroke-width="2.5" stroke-linejoin="round" paint-order="stroke" textLength="48.3" lengthAdjust="spacingAndGlyphs">ON PARK</text><text x="612.5" y="618.9" font-size="10" font-weight="bold" letter-spacing="1.2" text-anchor="middle" fill="#7c8ba6" stroke="#fff" stroke-width="2.5" stroke-linejoin="round" paint-order="stroke" textLength="66.6" lengthAdjust="spacingAndGlyphs">YORK MILLS</text><text x="230.5" y="830.6" font-size="10" font-weight="bold" letter-spacing="1.2" text-anchor="middle" fill="#7c8ba6" stroke="#fff" stroke-width="2.5" stroke-linejoin="round" paint-order="stroke" textLength="47.0" lengthAdjust="spacingAndGlyphs">WESTON</text><text x="301.1" y="845.2" font-size="10" font-weight="bold" letter-spacing="1.2" text-anchor="middle" fill="#7c8ba6" stroke="#fff" stroke-width="2.5" stroke-linejoin="round" paint-order="stroke" textLength="143.5" lengthAdjust="spacingAndGlyphs">BROOKHAVEN-AMESBURY</text><text x="428.4" y="810.8" font-size="10" font-weight="bold" letter-spacing="1.2" text-anchor="middle" fill="#7c8ba6" stroke="#fff" stroke-width="2.5" stroke-linejoin="round" paint-order="stroke" textLength="69.9" lengthAdjust="spacingAndGlyphs">BRIAR HILL -</text><text x="429.5" y="820.6" font-size="10" font-weight="bold" letter-spacing="1.2" text-anchor="middle" fill="#7c8ba6" stroke="#fff" stroke-width="2.5" stroke-linejoin="round" paint-order="stroke" textLength="63.0" lengthAdjust="spacingAndGlyphs">BELGRAVIA</text><text x="148.1" y="880.6" font-size="10" font-weight="bold" letter-spacing="1.2" text-anchor="middle" fill="#7c8ba6" stroke="#fff" stroke-width="2.5" stroke-linejoin="round" paint-order="stroke" textLength="55.3" lengthAdjust="spacingAndGlyphs">RICHVIEW</text><text x="194.3" y="968.3" font-size="10" font-weight="bold" letter-spacing="1.2" text-anchor="middle" fill="#7c8ba6" stroke="#fff" stroke-width="2.5" stroke-linejoin="round" paint-order="stroke" textLength="46.6" lengthAdjust="spacingAndGlyphs">HUMBER</text><text x="193.8" y="978.4" font-size="10" font-weight="bold" letter-spacing="1.2" text-anchor="middle" fill="#7c8ba6" stroke="#fff" stroke-width="2.5" stroke-linejoin="round" paint-order="stroke" textLength="92.7" lengthAdjust="spacingAndGlyphs">VALLEY VILLAGE</text><text x="369.4" y="943.6" font-size="10" font-weight="bold" letter-spacing="1.2" text-anchor="middle" fill="#7c8ba6" stroke="#fff" stroke-width="2.5" stroke-linejoin="round" paint-order="stroke" textLength="74.1" lengthAdjust="spacingAndGlyphs">STOCKYARDS</text><text x="369.4" y="953.5" font-size="10" font-weight="bold" letter-spacing="1.2" text-anchor="middle" fill="#7c8ba6" stroke="#fff" stroke-width="2.5" stroke-linejoin="round" paint-order="stroke" textLength="51.7" lengthAdjust="spacingAndGlyphs">DISTRICT</text><text x="368.2" y="980.1" font-size="10" font-weight="bold" letter-spacing="1.2" text-anchor="middle" fill="#7c8ba6" stroke="#fff" stroke-width="2.5" stroke-linejoin="round" paint-order="stroke" textLength="82.4" lengthAdjust="spacingAndGlyphs">THE JUNCTION</text><text x="598.7" y="797.7" font-size="10" font-weight="bold" letter-spacing="1.2" text-anchor="middle" fill="#7c8ba6" stroke="#fff" stroke-width="2.5" stroke-linejoin="round" paint-order="stroke" textLength="52.9" lengthAdjust="spacingAndGlyphs">MIDTOWN</text><text x="598.7" y="807.6" font-size="10" font-weight="bold" letter-spacing="1.2" text-anchor="middle" fill="#7c8ba6" stroke="#fff" stroke-width="2.5" stroke-linejoin="round" paint-order="stroke" textLength="52.9" lengthAdjust="spacingAndGlyphs">TORONTO</text><text x="822.8" y="603.7" font-size="10" font-weight="bold" letter-spacing="1.2" text-anchor="middle" fill="#7c8ba6" stroke="#fff" stroke-width="2.5" stroke-linejoin="round" paint-order="stroke" textLength="69.5" lengthAdjust="spacingAndGlyphs">PARKWOODS</text><text x="777.5" y="638.0" font-size="10" font-weight="bold" letter-spacing="1.2" text-anchor="middle" fill="#7c8ba6" stroke="#fff" stroke-width="2.5" stroke-linejoin="round" paint-order="stroke" textLength="60.9" lengthAdjust="spacingAndGlyphs">DON MILLS</text><text x="903.5" y="572.6" font-size="10" font-weight="bold" letter-spacing="1.2" text-anchor="middle" fill="#7c8ba6" stroke="#fff" stroke-width="2.5" stroke-linejoin="round" paint-order="stroke" textLength="60.4" lengthAdjust="spacingAndGlyphs">MARYVALE</text><text x="944.2" y="711.3" font-size="10" font-weight="bold" letter-spacing="1.2" text-anchor="middle" fill="#7c8ba6" stroke="#fff" stroke-width="2.5" stroke-linejoin="round" paint-order="stroke" textLength="74.5" lengthAdjust="spacingAndGlyphs">GOLDEN MILE</text><text x="956.8" y="756.4" font-size="10" font-weight="bold" letter-spacing="1.2" text-anchor="middle" fill="#7c8ba6" stroke="#fff" stroke-width="2.5" stroke-linejoin="round" paint-order="stroke" textLength="60.9" lengthAdjust="spacingAndGlyphs">CLAIRLEA -</text><text x="959.0" y="766.6" font-size="10" font-weight="bold" letter-spacing="1.2" text-anchor="middle" fill="#7c8ba6" stroke="#fff" stroke-width="2.5" stroke-linejoin="round" paint-order="stroke" textLength="74.4" lengthAdjust="spacingAndGlyphs">BIRCHMOUNT</text><text x="1049.5" y="718.6" font-size="10" font-weight="bold" letter-spacing="1.2" text-anchor="middle" fill="#7c8ba6" stroke="#fff" stroke-width="2.5" stroke-linejoin="round" paint-order="stroke" textLength="85.0" lengthAdjust="spacingAndGlyphs">SCARBOROUGH</text><text x="1049.0" y="728.6" font-size="10" font-weight="bold" letter-spacing="1.2" text-anchor="middle" fill="#7c8ba6" stroke="#fff" stroke-width="2.5" stroke-linejoin="round" paint-order="stroke" textLength="58.0" lengthAdjust="spacingAndGlyphs">JUNCTION</text><text x="1073.5" y="670.6" font-size="10" font-weight="bold" letter-spacing="1.2" text-anchor="middle" fill="#7c8ba6" stroke="#fff" stroke-width="2.5" stroke-linejoin="round" paint-order="stroke" textLength="89.0" lengthAdjust="spacingAndGlyphs">EGLINTON EAST</text><text x="1164.5" y="658.8" font-size="10" font-weight="bold" letter-spacing="1.2" text-anchor="middle" fill="#7c8ba6" stroke="#fff" stroke-width="2.5" stroke-linejoin="round" paint-order="stroke" textLength="84.5" lengthAdjust="spacingAndGlyphs">SCARBOROUGH</text><text x="1164.6" y="669.1" font-size="10" font-weight="bold" letter-spacing="1.2" text-anchor="middle" fill="#7c8ba6" stroke="#fff" stroke-width="2.5" stroke-linejoin="round" paint-order="stroke" textLength="46.3" lengthAdjust="spacingAndGlyphs">VILLAGE</text><text x="1135.2" y="724.2" font-size="10" font-weight="bold" letter-spacing="1.2" text-anchor="middle" fill="#7c8ba6" stroke="#fff" stroke-width="2.5" stroke-linejoin="round" paint-order="stroke" textLength="66.5" lengthAdjust="spacingAndGlyphs">CLIFFCREST</text><text x="769.5" y="794.2" font-size="10" font-weight="bold" letter-spacing="1.2" text-anchor="middle" fill="#7c8ba6" stroke="#fff" stroke-width="2.5" stroke-linejoin="round" paint-order="stroke" textLength="77.0" lengthAdjust="spacingAndGlyphs">THORNCLIFFE</text><text x="770.0" y="804.6" font-size="10" font-weight="bold" letter-spacing="1.2" text-anchor="middle" fill="#7c8ba6" stroke="#fff" stroke-width="2.5" stroke-linejoin="round" paint-order="stroke" textLength="30.0" lengthAdjust="spacingAndGlyphs">PARK</text><text x="839.3" y="901.2" font-size="10" font-weight="bold" letter-spacing="1.2" text-anchor="middle" fill="#7c8ba6" stroke="#fff" stroke-width="2.5" stroke-linejoin="round" paint-order="stroke" textLength="85.9" lengthAdjust="spacingAndGlyphs">THE DANFORTH</text><text x="798.8" y="977.7" font-size="10" font-weight="bold" letter-spacing="1.2" text-anchor="middle" fill="#7c8ba6" stroke="#fff" stroke-width="2.5" stroke-linejoin="round" paint-order="stroke" textLength="68.3" lengthAdjust="spacingAndGlyphs">LESLIEVILLE</text><text x="916.8" y="972.3" font-size="10" font-weight="bold" letter-spacing="1.2" text-anchor="middle" fill="#7c8ba6" stroke="#fff" stroke-width="2.5" stroke-linejoin="round" paint-order="stroke" textLength="76.9" lengthAdjust="spacingAndGlyphs">THE BEACHES</text><text x="127.0" y="662.8" font-size="10" font-weight="bold" letter-spacing="1.2" text-anchor="middle" fill="#7c8ba6" stroke="#fff" stroke-width="2.5" stroke-linejoin="round" paint-order="stroke" textLength="16.0" lengthAdjust="spacingAndGlyphs">HU</text><text x="112.0" y="671.4" font-size="10" font-weight="bold" letter-spacing="1.2" text-anchor="middle" fill="#7c8ba6" stroke="#fff" stroke-width="2.5" stroke-linejoin="round" paint-order="stroke" textLength="10.0" lengthAdjust="spacingAndGlyphs">VN</text><text x="117.5" y="729.4" font-size="10" font-weight="bold" letter-spacing="1.2" text-anchor="middle" fill="#7c8ba6" stroke="#fff" stroke-width="2.5" stroke-linejoin="round" paint-order="stroke" textLength="21.0" lengthAdjust="spacingAndGlyphs">HE E</text><text x="559.5" y="568.0" font-size="14" font-weight="bold" letter-spacing="2" text-anchor="middle" fill="#5f6f86" stroke="#fff" stroke-width="2.5" stroke-linejoin="round" paint-order="stroke" textLength="111.6" lengthAdjust="spacingAndGlyphs">NORTH YORK</text><text x="436.2" y="851.8" font-size="15" font-weight="bold" letter-spacing="2" text-anchor="middle" fill="#5f6f86" stroke="#fff" stroke-width="2.5" stroke-linejoin="round" paint-order="stroke" textLength="45.1" lengthAdjust="spacingAndGlyphs">YORK</text><text x="776.0" y="871.4" font-size="15" font-weight="bold" letter-spacing="1.5" text-anchor="middle" fill="#5f6f86" stroke="#fff" stroke-width="2.5" stroke-linejoin="round" paint-order="stroke" textLength="96.0" lengthAdjust="spacingAndGlyphs">EAST YORK</text><text x="236.6" y="916.5" font-size="14.5" text-anchor="middle" fill="#2a8c3c" stroke="#fff" stroke-width="2.5" stroke-linejoin="round" paint-order="stroke" textLength="104.0" lengthAdjust="spacingAndGlyphs">James Gardens</text><text x="703.4" y="913.2" font-size="14.5" text-anchor="middle" fill="#2a8c3c" stroke="#fff" stroke-width="2.5" stroke-linejoin="round" paint-order="stroke" textLength="65.2" lengthAdjust="spacingAndGlyphs">Evergreen</text><text x="703.5" y="927.8" font-size="14.5" text-anchor="middle" fill="#2a8c3c" stroke="#fff" stroke-width="2.5" stroke-linejoin="round" paint-order="stroke" textLength="79.0" lengthAdjust="spacingAndGlyphs">Brick Works</text><text x="671.9" y="958.9" font-size="14.5" text-anchor="middle" fill="#2a8c3c" stroke="#fff" stroke-width="2.5" stroke-linejoin="round" paint-order="stroke" textLength="92.3" lengthAdjust="spacingAndGlyphs">Allan Gardens</text><text x="924.1" y="871.8" font-size="14.5" text-anchor="middle" fill="#2a8c3c" stroke="#fff" stroke-width="2.5" stroke-linejoin="round" paint-order="stroke" textLength="29.4" lengthAdjust="spacingAndGlyphs">Glen</text><text x="924.6" y="886.4" font-size="14.5" text-anchor="middle" fill="#2a8c3c" stroke="#fff" stroke-width="2.5" stroke-linejoin="round" paint-order="stroke" textLength="84.7" lengthAdjust="spacingAndGlyphs">Stewart Park</text><text x="881.0" y="946.4" font-size="14.5" text-anchor="middle" fill="#2a8c3c" stroke="#fff" stroke-width="2.5" stroke-linejoin="round" paint-order="stroke" textLength="120.0" lengthAdjust="spacingAndGlyphs">Balmy Beach Park</text><text x="1044.8" y="779.2" font-size="14.5" text-anchor="middle" fill="#2a8c3c" stroke="#fff" stroke-width="2.5" stroke-linejoin="round" paint-order="stroke" textLength="50.4" lengthAdjust="spacingAndGlyphs">Rosetta</text><text x="1044.7" y="793.8" font-size="14.5" text-anchor="middle" fill="#2a8c3c" stroke="#fff" stroke-width="2.5" stroke-linejoin="round" paint-order="stroke" textLength="53.5" lengthAdjust="spacingAndGlyphs">McClain</text><text x="1044.5" y="809.1" font-size="14.5" text-anchor="middle" fill="#2a8c3c" stroke="#fff" stroke-width="2.5" stroke-linejoin="round" paint-order="stroke" textLength="55.0" lengthAdjust="spacingAndGlyphs">Gardens</text><text x="1119.0" y="753.2" font-size="14.5" text-anchor="middle" fill="#2a8c3c" stroke="#fff" stroke-width="2.5" stroke-linejoin="round" paint-order="stroke" textLength="86.0" lengthAdjust="spacingAndGlyphs">Scarborough</text><text x="1119.0" y="767.2" font-size="14.5" text-anchor="middle" fill="#2a8c3c" stroke="#fff" stroke-width="2.5" stroke-linejoin="round" paint-order="stroke" textLength="74.0" lengthAdjust="spacingAndGlyphs">Bluffs Park</text><text x="1195.1" y="586.6" font-size="14.5" text-anchor="middle" fill="#16879a" stroke="#fff" stroke-width="2.5" stroke-linejoin="round" paint-order="stroke" textLength="139.8" lengthAdjust="spacingAndGlyphs">Guild Park &amp; Gardens</text><text x="694.0" y="746.2" font-size="14.5" text-anchor="middle" fill="#16879a" stroke="#fff" stroke-width="2.5" stroke-linejoin="round" paint-order="stroke" textLength="152.0" lengthAdjust="spacingAndGlyphs">Ontario Science Centre</text><text x="400.0" y="1007.2" font-size="14.5" text-anchor="middle" fill="#16879a" stroke="#fff" stroke-width="2.5" stroke-linejoin="round" paint-order="stroke" textLength="76.0" lengthAdjust="spacingAndGlyphs">Museum of</text><text x="370.0" y="1021.2" font-size="14.5" text-anchor="middle" fill="#16879a" stroke="#fff" stroke-width="2.5" stroke-linejoin="round" paint-order="stroke" textLength="120.0" lengthAdjust="spacingAndGlyphs">Contemporary Art</text><text x="533.5" y="746.2" font-size="14.5" text-anchor="middle" fill="#3b78d8" stroke="#fff" stroke-width="2.5" stroke-linejoin="round" paint-order="stroke" textLength="149.0" lengthAdjust="spacingAndGlyphs">Lawrence Allen Centre</text><text x="538.5" y="1009.2" font-size="14.5" text-anchor="middle" fill="#3b78d8" stroke="#fff" stroke-width="2.5" stroke-linejoin="round" paint-order="stroke" textLength="85.0" lengthAdjust="spacingAndGlyphs">Dufferin Mall</text><text x="179.0" y="758.2" font-size="14.5" text-anchor="middle" fill="#3b78d8" stroke="#fff" stroke-width="2.5" stroke-linejoin="round" paint-order="stroke" textLength="106.0" lengthAdjust="spacingAndGlyphs">Leon's Furniture</text><text x="1199" y="622" font-size="11.5" fill="#8a5a2a" stroke="#fff" stroke-width="2" paint-order="stroke" text-anchor="middle" transform="rotate(-57 1199 622)">Kingston Rd</text><text x="806" y="690" font-size="11" fill="#8a5a2a" stroke="#fff" stroke-width="2" paint-order="stroke" text-anchor="middle" transform="rotate(77 806 690)">Don Valley Pkwy</text><rect x="481" y="663" width="20" height="15" rx="3" fill="#fff" stroke="#555" stroke-width="1"/><text x="491" y="674.5" font-size="9.5" text-anchor="middle" fill="#333">401</text><rect x="267" y="775.5" width="20" height="15" rx="3" fill="#fff" stroke="#555" stroke-width="1"/><text x="277" y="787.0" font-size="9.5" text-anchor="middle" fill="#333">400</text><path d="M236.5 953.5 L228.6 941.0 A10.9 10.9 0 1 1 244.4 941.0 Z" fill="#2f9e46" stroke="#fff" stroke-width="1"/><path d="M236.5 926.7 L232.0 932.7 L234.0 932.7 L231.0 937.2 L235.5 937.2 L235.5 940.2 L237.5 940.2 L237.5 937.2 L242.0 937.2 L239.0 932.7 L241.0 932.7 Z" fill="#fff"/><path d="M703 898.5 L695.1 886.0 A10.9 10.9 0 1 1 710.9 886.0 Z" fill="#2f9e46" stroke="#fff" stroke-width="1"/><path d="M703 871.7 L698.5 877.7 L700.5 877.7 L697.5 882.2 L702 882.2 L702 885.2 L704 885.2 L704 882.2 L708.5 882.2 L705.5 877.7 L707.5 877.7 Z" fill="#fff"/><path d="M923.7 922.5 L915.8000000000001 910.0 A10.9 10.9 0 1 1 931.6 910.0 Z" fill="#2f9e46" stroke="#fff" stroke-width="1"/><path d="M923.7 895.7 L919.2 901.7 L921.2 901.7 L918.2 906.2 L922.7 906.2 L922.7 909.2 L924.7 909.2 L924.7 906.2 L929.2 906.2 L926.2 901.7 L928.2 901.7 Z" fill="#fff"/><path d="M955.3 955.5 L947.4 943.0 A10.9 10.9 0 1 1 963.1999999999999 943.0 Z" fill="#2f9e46" stroke="#fff" stroke-width="1"/><path d="M955.3 928.7 L950.8 934.7 L952.8 934.7 L949.8 939.2 L954.3 939.2 L954.3 942.2 L956.3 942.2 L956.3 939.2 L960.8 939.2 L957.8 934.7 L959.8 934.7 Z" fill="#fff"/><path d="M1044.5 845.5 L1036.6 833.0 A10.9 10.9 0 1 1 1052.4 833.0 Z" fill="#2f9e46" stroke="#fff" stroke-width="1"/><path d="M1044.5 818.7 L1040.0 824.7 L1042.0 824.7 L1039.0 829.2 L1043.5 829.2 L1043.5 832.2 L1045.5 832.2 L1045.5 829.2 L1050.0 829.2 L1047.0 824.7 L1049.0 824.7 Z" fill="#fff"/><path d="M1120 804.5 L1112.1 792.0 A10.9 10.9 0 1 1 1127.9 792.0 Z" fill="#2f9e46" stroke="#fff" stroke-width="1"/><path d="M1120 777.7 L1115.5 783.7 L1117.5 783.7 L1114.5 788.2 L1119 788.2 L1119 791.2 L1121 791.2 L1121 788.2 L1125.5 788.2 L1122.5 783.7 L1124.5 783.7 Z" fill="#fff"/><path d="M672.5 995.5 L664.6 983.0 A10.9 10.9 0 1 1 680.4 983.0 Z" fill="#2f9e46" stroke="#fff" stroke-width="1"/><circle cx="672.5" cy="972.3" r="2.2" fill="#fff"/><circle cx="675.7" cy="974.6" r="2.2" fill="#fff"/><circle cx="674.5" cy="978.5" r="2.2" fill="#fff"/><circle cx="670.5" cy="978.5" r="2.2" fill="#fff"/><circle cx="669.3" cy="974.6" r="2.2" fill="#fff"/><path d="M784.5 759.5 L776.6 747.0 A10.9 10.9 0 1 1 792.4 747.0 Z" fill="#1fa1b3" stroke="#fff" stroke-width="1"/><path d="M778.5 737.7 L784.5 733.7 L790.5 737.7 Z M779.5 738.7 H789.5 V744.7 H779.5 Z" fill="#fff"/><text x="784.5" y="743.7" font-size="6" font-weight="bold" text-anchor="middle" fill="#1fa1b3">M</text><path d="M1241.5 623.5 L1233.6 611.0 A10.9 10.9 0 1 1 1249.4 611.0 Z" fill="#1fa1b3" stroke="#fff" stroke-width="1"/><path d="M1235.5 601.7 L1241.5 597.7 L1247.5 601.7 Z M1236.5 602.7 H1246.5 V608.7 H1236.5 Z" fill="#fff"/><text x="1241.5" y="607.7" font-size="6" font-weight="bold" text-anchor="middle" fill="#1fa1b3">M</text><path d="M451 1022.5 L443.1 1010.0 A10.9 10.9 0 1 1 458.9 1010.0 Z" fill="#1fa1b3" stroke="#fff" stroke-width="1"/><path d="M445 1000.7 L451 996.7 L457 1000.7 Z M446 1001.7 H456 V1007.7 H446 Z" fill="#fff"/><text x="451" y="1006.7" font-size="6" font-weight="bold" text-anchor="middle" fill="#1fa1b3">M</text><path d="M446.3 755.8 L438.40000000000003 743.3 A10.9 10.9 0 1 1 454.2 743.3 Z" fill="#3f86f0" stroke="#fff" stroke-width="1"/><rect x="441.3" y="733.0" width="10" height="8" rx="1" fill="#fff"/><path d="M443.8 733.0 V731.0 A2.5 2.5 0 0 1 448.8 731.0 V733.0" fill="none" stroke="#fff" stroke-width="1.2"/><path d="M482.5 1018.5 L474.6 1006.0 A10.9 10.9 0 1 1 490.4 1006.0 Z" fill="#3f86f0" stroke="#fff" stroke-width="1"/><rect x="477.5" y="995.7" width="10" height="8" rx="1" fill="#fff"/><path d="M480.0 995.7 V993.7 A2.5 2.5 0 0 1 485.0 993.7 V995.7" fill="none" stroke="#fff" stroke-width="1.2"/><path d="M246.6 768.5 L238.7 756.0 A10.9 10.9 0 1 1 254.5 756.0 Z" fill="#3f86f0" stroke="#fff" stroke-width="1"/><rect x="241.6" y="745.7" width="10" height="8" rx="1" fill="#fff"/><path d="M244.1 745.7 V743.7 A2.5 2.5 0 0 1 249.1 743.7 V745.7" fill="none" stroke="#fff" stroke-width="1.2"/><circle cx="357" cy="579" r="30" fill="url(#ho)" opacity="0.55"/><circle cx="308" cy="764" r="28" fill="url(#hr)" opacity="0.85"/><circle cx="226" cy="817" r="22" fill="url(#ho)" opacity="0.7"/><circle cx="469" cy="781" r="24" fill="url(#hg)" opacity="0.55"/><circle cx="445" cy="851" r="30" fill="url(#ho)" opacity="1"/><circle cx="466" cy="918" r="22" fill="url(#hg)" opacity="0.45"/><circle cx="773" cy="708" r="30" fill="url(#hr)" opacity="0.7"/><circle cx="859" cy="746" r="24" fill="url(#ho)" opacity="0.55"/></g></svg>
<div class="a" style="left:133px;top:585.5px;width:310px;height:171px;background:#fff;border-radius:7px;box-shadow:0 1px 4px rgba(0,0,0,0.18)"></div>
<svg style="left:228px;top:611px" width="16" height="14" viewBox="0 0 16 14"><path d="M1.5 3 H14 M1.5 7 H14 M1.5 11 H14" stroke="#5a6e85" stroke-width="1.2"/><circle cx="10" cy="3" r="1.5" fill="#fff" stroke="#5a6e85" stroke-width="1.1"/><circle cx="5" cy="7" r="1.5" fill="#fff" stroke="#5a6e85" stroke-width="1.1"/><circle cx="10" cy="11" r="1.5" fill="#fff" stroke="#5a6e85" stroke-width="1.1"/></svg>
<div class="t" style="left:247.0px;top:614.59px;font-size:12.3px;color:#5a6e85;font-weight:700;">MAP FILTERS</div>
<svg style="left:401px;top:609px" width="22" height="22" viewBox="0 0 22 22"><circle cx="11" cy="11" r="9" fill="none" stroke="#5e7690" stroke-width="1.2"/><path d="M12.6 7 L8.8 11 L12.6 15" fill="none" stroke="#5e7690" stroke-width="1.3"/></svg>
<div class="t" style="left:127.6px;width:320px;text-align:center;top:646.08px;font-size:12.9px;color:#1c1c1c;-webkit-text-stroke:0.15px #1c1c1c;">Please choose the map view you would like to</div>
<div class="t" style="left:127.6px;width:320px;text-align:center;top:665.28px;font-size:12.9px;color:#1c1c1c;-webkit-text-stroke:0.15px #1c1c1c;">apply to the map</div>
<div class="a" style="left:231.5px;top:700px;width:113px;height:34px;background:#fff;border:1px solid #dcdcdc;border-radius:5px"></div>
<div class="a" style="left:231.5px;top:700px;width:57px;height:34px;background:#6f8298;border-radius:5px 0 0 5px"></div>
<svg style="left:247px;top:706px" width="24" height="22" viewBox="0 0 24 22"><path d="M2.5 19 L11.5 3 L20.5 19 Z" fill="none" stroke="#fff" stroke-width="1.2"/><path d="M11.5 6 C14 9 15 11 14 13.5 C13 16 9.5 16 8.8 13.5 C8.3 11.5 10 10 10.5 8.5" fill="none" stroke="#fff" stroke-width="1.1"/><path d="M11 12 L12.5 13.5 L10.5 15 L12 17" fill="none" stroke="#fff" stroke-width="1"/></svg>
<svg style="left:304px;top:706px" width="20" height="22" viewBox="0 0 20 22"><path d="M10 19 C6 15 3.2 12 3.2 8.6 C3.2 4.8 6.2 2.2 10 2.2 C13.8 2.2 16.8 4.8 16.8 8.6 C16.8 12 14 15 10 19 Z" fill="none" stroke="#8fa2b6" stroke-width="1.1"/><circle cx="10" cy="8.6" r="2.6" fill="none" stroke="#8fa2b6" stroke-width="1.1"/></svg>
<div class="a" style="left:1518.5px;top:598px;width:343px;height:34px;background:#fff;border-radius:3px;box-shadow:0 1px 2px rgba(0,0,0,0.15)"></div>
<svg style="left:1522px;top:604px" width="20" height="20" viewBox="0 0 20 20"><circle cx="11.7" cy="9.8" r="5" fill="none" stroke="#9a9a9a" stroke-width="1.2"/><path d="M8.2 13.4 L3.2 18.4" stroke="#9a9a9a" stroke-width="1.3"/></svg>
<div class="t" style="left:1549.8px;top:608.95px;font-size:12.7px;color:#a8a8a8;">Search Location</div>

</body></html>
